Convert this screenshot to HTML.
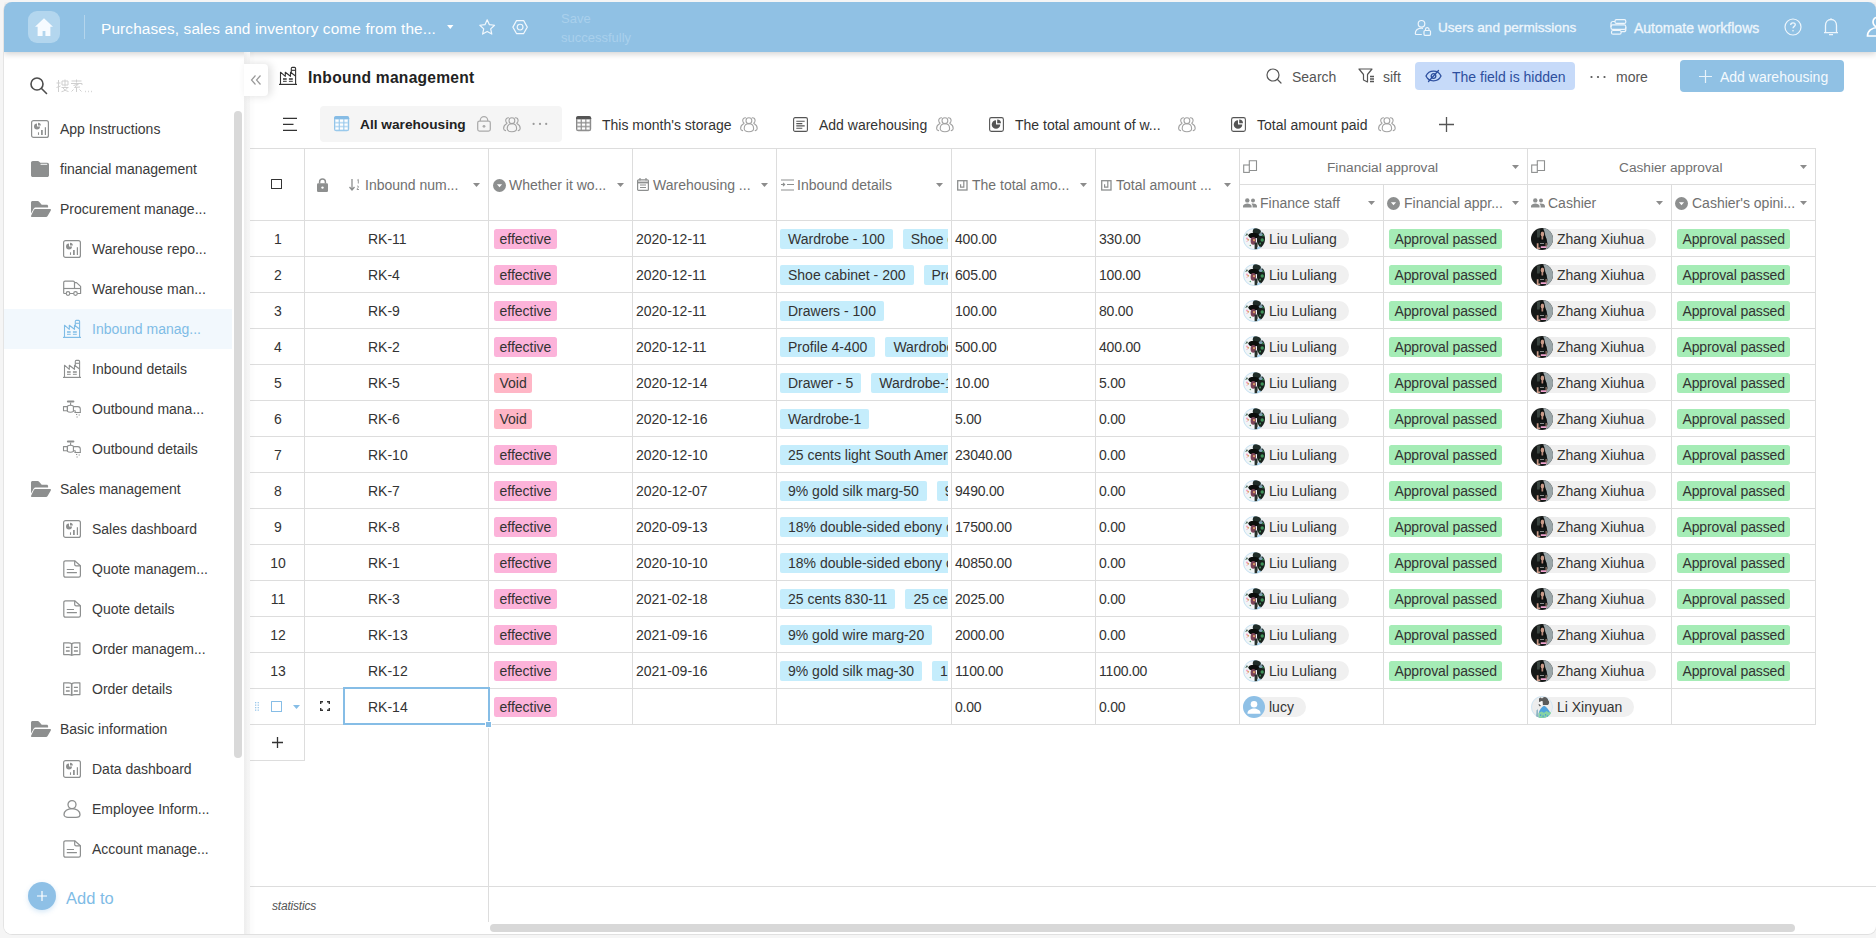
<!DOCTYPE html><html><head><meta charset="utf-8"><title>Inbound management</title><style>
*{box-sizing:border-box;margin:0;padding:0}
html,body{width:1876px;height:938px;overflow:hidden;background:#f5f5f5;font-family:"Liberation Sans", sans-serif;font-size:14px;color:#333}
.abs{position:absolute}
#panel{position:absolute;left:3px;top:2px;width:1874px;height:933px;background:#fff;border-radius:9px;border-left:1px solid #e4e4e4;border-bottom:1px solid #e0e0e0;border-right:1px solid #e4e4e4;overflow:hidden}
#hdr{position:absolute;left:4px;top:2px;width:1872px;height:50px;background:#90c1e4;border-radius:8px 8px 0 0;box-shadow:0 2px 6px rgba(0,0,0,.18);clip-path:inset(0 0 -14px 0)}
.t{position:absolute;white-space:nowrap;line-height:20px;height:20px}
.hl{position:absolute;height:1px;background:#dddddd}
.vl{position:absolute;width:1px;background:#dddddd}
.tag{position:absolute;height:20px;line-height:20px;border-radius:2.500px;padding:0 5.500px;white-space:nowrap;color:#333;font-size:14px}
.pill{position:absolute;height:20px;line-height:20px;border-radius:10px;background:#f0f0f0;padding:0 12px 0 26px;white-space:nowrap;color:#333}
.av{position:absolute;width:22px;height:22px;border-radius:50%;overflow:hidden}
.cell{position:absolute;overflow:hidden;height:35px}
.sb{color:#333}
.ht{color:#707070}
svg{position:absolute;overflow:visible}
</style></head><body>
<div id="panel"></div>
<div class="abs" style="left:4px;top:52px;width:240px;height:882px;background:#fff;border-radius:0 0 0 8px"></div>
<div class="abs" style="left:4px;top:309px;width:228px;height:40px;background:#f2f8fd"></div>
<div class="abs" style="left:234px;top:111px;width:8px;height:647px;background:#d9d9d9;border-radius:4px"></div>
<svg style="left:31px;top:120.0px" width="18" height="18" viewBox="0 0 18 18" fill="none" stroke="#8d8f8f"><rect x=".6" y=".6" width="16.800" height="16.800" rx="2" stroke-width="1.200"/><path d="M6 3.600A3 3 0 1 0 9 6.600H6z" fill="#8d8f8f" stroke="none"/><path d="M7 2.700a2.800 2.800 0 0 1 2.800 2.800H7z" fill="#8d8f8f" stroke="none"/><path d="M7.500 12.300v2.600" stroke-width="1.100"/><path d="M10.900 10.100v4.800" stroke-width="1.700"/><path d="M14.400 7.200v7.700" stroke-width="1.200"/></svg>
<div class="t" style="left:60px;top:119px;color:#3a3a3a">App Instructions</div>
<svg style="left:31px;top:161.0px" width="18" height="16" viewBox="0 0 18 16"><path d="M0 1.800C0 .8.800 0 1.800 0h5c.6 0 1.100.2 1.500.7l1 1.100h6.900c1 0 1.800.8 1.800 1.800v10.600c0 1-.8 1.800-1.800 1.800H1.800C.8 16 0 15.200 0 14.200z" fill="#8d8f8f"/><path d="M10 3.300h5.800" stroke="#e6e8e8" stroke-width="1.200" stroke-linecap="round"/></svg>
<div class="t" style="left:60px;top:159px;color:#3a3a3a">financial management</div>
<svg style="left:31px;top:201.0px" width="20" height="16" viewBox="0 0 20 16"><path d="M0 1.500C0 .7.700 0 1.500 0h5.200c.5 0 .9.200 1.200.5L10.700 3.700h5c.8 0 1.400.6 1.400 1.400v1.300H4.800c-.9 0-1.600.5-2 1.200L0 12.500z" fill="#8d8f8f"/><path d="M4.300 8h14.700c.8 0 1.200.7.800 1.400l-3.200 5.600c-.3.600-.9 1-1.600 1H.9c-.7 0-1.100-.7-.8-1.300l2.700-5.700C3.100 8.400 3.600 8 4.300 8z" fill="#8d8f8f"/></svg>
<div class="t" style="left:60px;top:199px;color:#3a3a3a">Procurement manage...</div>
<svg style="left:63px;top:240.0px" width="18" height="18" viewBox="0 0 18 18" fill="none" stroke="#8d8f8f"><rect x=".6" y=".6" width="16.800" height="16.800" rx="2" stroke-width="1.200"/><path d="M6 3.600A3 3 0 1 0 9 6.600H6z" fill="#8d8f8f" stroke="none"/><path d="M7 2.700a2.800 2.800 0 0 1 2.800 2.800H7z" fill="#8d8f8f" stroke="none"/><path d="M7.500 12.300v2.600" stroke-width="1.100"/><path d="M10.900 10.100v4.800" stroke-width="1.700"/><path d="M14.400 7.200v7.700" stroke-width="1.200"/></svg>
<div class="t" style="left:92px;top:239px;color:#3a3a3a">Warehouse repo...</div>
<svg style="left:63px;top:280.0px" width="18" height="18" viewBox="0 0 18 18" fill="none" stroke="#8d8f8f" stroke-width="1.200" stroke-linejoin="round"><path d="M.7 13.500V2.600c0-.8.600-1.400 1.400-1.400h8c.8 0 1.400.6 1.400 1.400v5.900"/><path d="M11.500 2.600h2l4.100 3.800v7.100H.7"/><path d="M.7 8.500h16.900"/><circle cx="5" cy="13.500" r="1.800" fill="#fff"/><circle cx="12.500" cy="13.500" r="1.800" fill="#fff"/></svg>
<div class="t" style="left:92px;top:279px;color:#3a3a3a">Warehouse man...</div>
<svg style="left:63px;top:320.0px" width="18" height="18" viewBox="0 0 18 18" fill="none" stroke="#7fbce6" stroke-width="1.100" stroke-linejoin="round"><path d="M1.500 17.400V5.200l4.800 4.100V5.200l5.200 4.100V5.200l5 3.800"/><path d="M12.300 5.800V1.400c0-.6.400-1 1-1h2.300c.6 0 1 .4 1 1v16"/><path d="M12.300 3.300h4.300"/><path d="M0 17.400h18" stroke-width="1.200"/><path d="M4 11.900h3.700M9.900 11.900h3.900" stroke-width="1.500"/><path d="M4 14.300h3.700M9.900 14.300h3.900" stroke-width="1"/></svg>
<div class="t" style="left:92px;top:319px;color:#7fbce6">Inbound manag...</div>
<svg style="left:63px;top:360.0px" width="18" height="18" viewBox="0 0 18 18" fill="none" stroke="#8d8f8f" stroke-width="1.100" stroke-linejoin="round"><path d="M1.500 17.400V5.200l4.800 4.100V5.200l5.200 4.100V5.200l5 3.800"/><path d="M12.300 5.800V1.400c0-.6.400-1 1-1h2.300c.6 0 1 .4 1 1v16"/><path d="M12.300 3.300h4.300"/><path d="M0 17.400h18" stroke-width="1.200"/><path d="M4 11.900h3.700M9.900 11.900h3.900" stroke-width="1.500"/><path d="M4 14.300h3.700M9.900 14.300h3.900" stroke-width="1"/></svg>
<div class="t" style="left:92px;top:359px;color:#3a3a3a">Inbound details</div>
<svg style="left:63px;top:400.0px" width="18" height="18" viewBox="0 0 18 18" fill="none" stroke="#8d8f8f" stroke-width="1.100" stroke-linejoin="round"><path d="M4.900 1.500h5.500" stroke-width="2" stroke-linecap="round"/><path d="M7.600 2.500v2.700"/><path d="M4.400 6.200c1.500-1.200 4.500-1.200 6 0v5.200c-1.500 1.200-4.500 1.200-6 0z"/><path d="M.5 6.600h3.900v4.200H.5z"/><path d="M10.400 6.600h4.400c1.500 0 2.500 1 2.500 2.500v3.400h-5.100v-1.800h-1.800"/><path d="M11.600 12.500h6" stroke-width="1.100"/><path d="M13.600 14v1M16.200 14.400v1M14.100 16.400v1" stroke-width="1.200"/></svg>
<div class="t" style="left:92px;top:399px;color:#3a3a3a">Outbound mana...</div>
<svg style="left:63px;top:440.0px" width="18" height="18" viewBox="0 0 18 18" fill="none" stroke="#8d8f8f" stroke-width="1.100" stroke-linejoin="round"><path d="M4.900 1.500h5.500" stroke-width="2" stroke-linecap="round"/><path d="M7.600 2.500v2.700"/><path d="M4.400 6.200c1.500-1.200 4.500-1.200 6 0v5.200c-1.500 1.200-4.500 1.200-6 0z"/><path d="M.5 6.600h3.900v4.200H.5z"/><path d="M10.400 6.600h4.400c1.500 0 2.500 1 2.500 2.500v3.400h-5.100v-1.800h-1.800"/><path d="M11.600 12.500h6" stroke-width="1.100"/><path d="M13.600 14v1M16.200 14.400v1M14.100 16.400v1" stroke-width="1.200"/></svg>
<div class="t" style="left:92px;top:439px;color:#3a3a3a">Outbound details</div>
<svg style="left:31px;top:481.0px" width="20" height="16" viewBox="0 0 20 16"><path d="M0 1.500C0 .7.700 0 1.500 0h5.200c.5 0 .9.200 1.200.5L10.700 3.700h5c.8 0 1.400.6 1.400 1.400v1.300H4.800c-.9 0-1.600.5-2 1.200L0 12.500z" fill="#8d8f8f"/><path d="M4.300 8h14.700c.8 0 1.200.7.800 1.400l-3.200 5.600c-.3.600-.9 1-1.600 1H.9c-.7 0-1.100-.7-.8-1.300l2.700-5.700C3.100 8.400 3.600 8 4.300 8z" fill="#8d8f8f"/></svg>
<div class="t" style="left:60px;top:479px;color:#3a3a3a">Sales management</div>
<svg style="left:63px;top:520.0px" width="18" height="18" viewBox="0 0 18 18" fill="none" stroke="#8d8f8f"><rect x=".6" y=".6" width="16.800" height="16.800" rx="2" stroke-width="1.200"/><path d="M6 3.600A3 3 0 1 0 9 6.600H6z" fill="#8d8f8f" stroke="none"/><path d="M7 2.700a2.800 2.800 0 0 1 2.800 2.800H7z" fill="#8d8f8f" stroke="none"/><path d="M7.500 12.300v2.600" stroke-width="1.100"/><path d="M10.900 10.100v4.800" stroke-width="1.700"/><path d="M14.400 7.200v7.700" stroke-width="1.200"/></svg>
<div class="t" style="left:92px;top:519px;color:#3a3a3a">Sales dashboard</div>
<svg style="left:63px;top:560.0px" width="18" height="18" viewBox="0 0 18 18" fill="none" stroke="#8d8f8f" stroke-width="1.200" stroke-linejoin="round"><path d="M.8 2.500c0-1 .700-1.700 1.700-1.700h9.200l5.700 5v9.700c0 1-.7 1.700-1.700 1.700H2.500c-1 0-1.700-.7-1.700-1.700z"/><path d="M11.700 .8v3.600c0 .8.600 1.400 1.400 1.400h4.300"/><path d="M3.800 9.500H11M3.800 12.700h10.100"/></svg>
<div class="t" style="left:92px;top:559px;color:#3a3a3a">Quote managem...</div>
<svg style="left:63px;top:600.0px" width="18" height="18" viewBox="0 0 18 18" fill="none" stroke="#8d8f8f" stroke-width="1.200" stroke-linejoin="round"><path d="M.8 2.500c0-1 .700-1.700 1.700-1.700h9.200l5.700 5v9.700c0 1-.7 1.700-1.700 1.700H2.500c-1 0-1.700-.7-1.700-1.700z"/><path d="M11.700 .8v3.600c0 .8.600 1.400 1.400 1.400h4.300"/><path d="M3.800 9.500H11M3.800 12.700h10.100"/></svg>
<div class="t" style="left:92px;top:599px;color:#3a3a3a">Quote details</div>
<svg style="left:63px;top:642.0px" width="18" height="14" viewBox="0 0 18 14" fill="none" stroke="#8d8f8f" stroke-width="1.200" stroke-linejoin="round"><path d="M.7 .8h5c1.400 0 2.300.300 3 1 .7-.700 1.600-1 3-1h5.200v11.800h-5.200c-1.400 0-2.300.2-3 .8-.7-.6-1.600-.8-3-.8h-5z"/><path d="M8.700 1.800v11.500" stroke-width="1.600"/><path d="M2.900 5.300h3.800M2.900 9h3.800M10.900 5.300h4M10.900 9h4" stroke-width="1.300"/></svg>
<div class="t" style="left:92px;top:639px;color:#3a3a3a">Order managem...</div>
<svg style="left:63px;top:682.0px" width="18" height="14" viewBox="0 0 18 14" fill="none" stroke="#8d8f8f" stroke-width="1.200" stroke-linejoin="round"><path d="M.7 .8h5c1.400 0 2.300.300 3 1 .7-.700 1.600-1 3-1h5.200v11.800h-5.200c-1.400 0-2.300.2-3 .8-.7-.6-1.600-.8-3-.8h-5z"/><path d="M8.700 1.800v11.500" stroke-width="1.600"/><path d="M2.900 5.300h3.800M2.900 9h3.800M10.900 5.300h4M10.900 9h4" stroke-width="1.300"/></svg>
<div class="t" style="left:92px;top:679px;color:#3a3a3a">Order details</div>
<svg style="left:31px;top:721.0px" width="20" height="16" viewBox="0 0 20 16"><path d="M0 1.500C0 .7.700 0 1.500 0h5.200c.5 0 .9.200 1.200.5L10.700 3.700h5c.8 0 1.400.6 1.400 1.400v1.300H4.800c-.9 0-1.600.5-2 1.200L0 12.500z" fill="#8d8f8f"/><path d="M4.300 8h14.700c.8 0 1.200.7.800 1.400l-3.200 5.600c-.3.600-.9 1-1.600 1H.9c-.7 0-1.100-.7-.8-1.300l2.700-5.700C3.100 8.400 3.600 8 4.300 8z" fill="#8d8f8f"/></svg>
<div class="t" style="left:60px;top:719px;color:#3a3a3a">Basic information</div>
<svg style="left:63px;top:760.0px" width="18" height="18" viewBox="0 0 18 18" fill="none" stroke="#8d8f8f"><rect x=".6" y=".6" width="16.800" height="16.800" rx="2" stroke-width="1.200"/><path d="M6 3.600A3 3 0 1 0 9 6.600H6z" fill="#8d8f8f" stroke="none"/><path d="M7 2.700a2.800 2.800 0 0 1 2.800 2.800H7z" fill="#8d8f8f" stroke="none"/><path d="M7.500 12.300v2.600" stroke-width="1.100"/><path d="M10.900 10.100v4.800" stroke-width="1.700"/><path d="M14.400 7.200v7.700" stroke-width="1.200"/></svg>
<div class="t" style="left:92px;top:759px;color:#3a3a3a">Data dashboard</div>
<svg style="left:63px;top:800.0px" width="18" height="18" viewBox="0 0 18 18" fill="none" stroke="#8d8f8f" stroke-width="1.300"><circle cx="9" cy="4.600" r="4"/><path d="M1 14.400c0-3.400 3.500-5.800 8-5.800s8 2.400 8 5.800c0 1.800-1.800 2.900-4 2.900H5c-2.200 0-4-1.100-4-2.900z"/></svg>
<div class="t" style="left:92px;top:799px;color:#3a3a3a">Employee Inform...</div>
<svg style="left:63px;top:840.0px" width="18" height="18" viewBox="0 0 18 18" fill="none" stroke="#8d8f8f" stroke-width="1.200" stroke-linejoin="round"><path d="M.8 2.500c0-1 .700-1.700 1.700-1.700h9.200l5.700 5v9.700c0 1-.7 1.700-1.700 1.700H2.500c-1 0-1.700-.7-1.700-1.700z"/><path d="M11.700 .8v3.600c0 .8.600 1.400 1.400 1.400h4.300"/><path d="M3.800 9.500H11M3.800 12.700h10.100"/></svg>
<div class="t" style="left:92px;top:839px;color:#3a3a3a">Account manage...</div>
<svg style="left:29px;top:76px" width="19" height="19" viewBox="0 0 19 19" fill="none" stroke="#4d4d4d" stroke-width="1.600" stroke-linecap="round"><circle cx="8" cy="8" r="6"/><path d="M12.500 12.500l5 5"/></svg>
<svg style="left:56px;top:79px" width="40" height="14" viewBox="0 0 40 14" fill="none" stroke="#cfcfcf" stroke-width="1"><path d="M2.500 1v12M.5 4h4M.5 8.500l4-1.500M6 2h6v4H6zM9 .5v7M5.500 8.500h7M7 8.500c.5 2 3 3.500 5.500 4M11.500 8.500c-.8 2-3 3.600-6 4.200"/><path d="M20.500 .5v3M15.500 2h10M15 4.500h11v1.500M17.500 6.500l5-1.500-4 3.500 5.500-.5M20.500 8.500V13M17.500 10.500l-2 2M23.500 10.500l2 2"/><path d="M29 12.500h.8M32 12.500h.8M35 12.500h.8" stroke-width="1.400"/></svg>
<div class="abs" style="left:28px;top:882px;width:28px;height:28px;border-radius:50%;background:#8ec0e6;box-shadow:0 2px 5px rgba(120,180,230,.3)"></div>
<svg style="left:36px;top:890px" width="12" height="12" viewBox="0 0 12 12" stroke="#fff" stroke-width="1.200"><path d="M6 1v10M1 6h10"/></svg>
<div class="t" style="left:66px;top:886.700px;font-size:16.500px;line-height:22px;height:22px;color:#7fbce6">Add to</div>
<div id="hdr"></div>
<div class="abs" style="left:28px;top:11px;width:32px;height:32px;border-radius:9px;background:#b3d6ee"></div>
<svg style="left:34px;top:17px" width="20" height="20" viewBox="0 0 20 20"><path d="M10 1.200L1 9.700h2.600V19h5v-5h2.800v5h5V9.700H19z" fill="#f6fbff"/></svg>
<div class="abs" style="left:84px;top:15px;width:1px;height:24px;background:#b4d5ec"></div>
<div class="t" style="left:101px;top:17px;font-size:15.400px;letter-spacing:.12px;line-height:24px;height:24px;color:#fff">Purchases, sales and inventory come from the...</div>
<svg style="left:447px;top:25px" width="6.500" height="4" viewBox="0 0 8 5"><path d="M0 0h8L4 5z" fill="#fff"/></svg>
<svg style="left:477.500px;top:17.600px" width="18.400" height="18.400" viewBox="0 0 20 20" fill="none" stroke="#f2f8fd" stroke-width="1.300" stroke-linejoin="round"><path d="M10 2l2.400 5.300 5.600.6-4.200 3.900 1.200 5.700L10 14.600 5 17.500l1.200-5.700L2 7.900l5.600-.6z"/></svg>
<svg style="left:512.300px;top:18.900px" width="16.200" height="16.200" viewBox="0 0 18 18" fill="none" stroke="#f2f8fd" stroke-width="1.300" stroke-linejoin="round"><path d="M5 1.800h8L17 9l-4 7.200H5L1 9z"/><circle cx="9" cy="9" r="3.200"/></svg>
<div class="t" style="left:561px;top:10px;font-size:13px;line-height:18px;height:18px;color:#a9d0ec">Save</div>
<div class="t" style="left:561px;top:29px;font-size:13px;line-height:18px;height:18px;color:#a9d0ec">successfully</div>
<svg style="left:1414px;top:19px" width="18" height="18" viewBox="0 0 18 18" fill="none" stroke="#eef6fc" stroke-width="1.200"><circle cx="7.500" cy="4.800" r="3.300"/><path d="M9 9.300c-.5-.1-1-.2-1.500-.2C4 9.100 1.300 11.200 1.300 14.500c0 .600.400 1 1 1h5.500"/><rect x="10" y="11.500" width="6.500" height="4.800" rx="1"/><path d="M11.500 11.500v-1.200a1.750 1.750 0 0 1 3.500 0v1.200"/></svg>
<div class="t" style="left:1438px;top:18px;font-size:13.600px;color:#eef6fc;-webkit-text-stroke:.3px #eef6fc">Users and permissions</div>
<svg style="left:1609.500px;top:18.500px" width="18" height="18" viewBox="0 0 18 18" fill="none" stroke="#eef6fc" stroke-width="1.200" stroke-linejoin="round"><rect x="5" y=".7" width="10.800" height="3.700" rx="1.500"/><rect x="1" y="5.900" width="14.800" height="4.500" rx="1.600"/><rect x="1.500" y="11.500" width="9.600" height="3.700" rx="1.500"/><path d="M5 2.500H3c-1.200 0-2 .8-2 2v3.500M15.800 8.200v2.500c0 1.200-.8 2-2 2h-2.700" /></svg>
<div class="t" style="left:1634px;top:18px;font-size:14px;color:#eef6fc;-webkit-text-stroke:.3px #eef6fc">Automate workflows</div>
<svg style="left:1784px;top:18px" width="18" height="18" viewBox="0 0 18 18" fill="none" stroke="#eef6fc" stroke-width="1.200"><circle cx="9" cy="9" r="8"/><path d="M6.700 7c0-1.300 1-2.200 2.300-2.200s2.300.8 2.300 2c0 1.500-2.300 1.700-2.300 3.500" stroke-width="1.300"/><circle cx="9" cy="12.700" r=".8" fill="#eef6fc" stroke="none"/></svg>
<svg style="left:1823px;top:17px" width="16" height="20" viewBox="0 0 16 20" fill="none" stroke="#eef6fc" stroke-width="1.300" stroke-linejoin="round"><path d="M8 1.200v1.300M2.500 15.500V8.500C2.500 5 4.800 2.500 8 2.500s5.500 2.500 5.500 6v7M1 15.700h14M6 17.700h4" /></svg>
<svg style="left:1866px;top:16px" width="24" height="22" viewBox="0 0 24 22" fill="none" stroke="#fff" stroke-width="1.700"><circle cx="12" cy="6" r="5"/><path d="M1.500 20c0-5 4-8.500 10.500-8.500S22.500 15 22.500 20z"/></svg>
<svg style="left:279px;top:67px" width="18" height="18" viewBox="0 0 18 18" fill="none" stroke="#333" stroke-width="1.100" stroke-linejoin="round"><path d="M1.500 17.400V5.200l4.800 4.100V5.200l5.200 4.100V5.200l5 3.800"/><path d="M12.300 5.800V1.400c0-.6.400-1 1-1h2.300c.6 0 1 .4 1 1v16"/><path d="M12.300 3.300h4.300"/><path d="M0 17.400h18" stroke-width="1.200"/><path d="M4 11.900h3.700M9.900 11.900h3.900" stroke-width="1.500"/><path d="M4 14.300h3.700M9.900 14.300h3.900" stroke-width="1"/></svg>
<div class="t" style="left:308px;top:67px;font-size:15.600px;letter-spacing:.25px;font-weight:700;line-height:22px;height:22px;color:#222">Inbound management</div>
<svg style="left:1266px;top:68px" width="16" height="16" viewBox="0 0 16 16" fill="none" stroke="#555" stroke-width="1.200" stroke-linecap="round"><circle cx="7" cy="7" r="6"/><path d="M11.500 11.500l3.500 3.500"/></svg>
<div class="t" style="left:1292px;top:67px;color:#555">Search</div>
<svg style="left:1358px;top:68px" width="18" height="16" viewBox="0 0 18 16" fill="none" stroke="#555" stroke-width="1.200" stroke-linejoin="round"><path d="M1 1h13l-4.500 5.500V14l-4-2V6.500z"/><path d="M12 8.500h4M12 11h4M12 13.500h4" stroke-width="1.300"/></svg>
<div class="t" style="left:1383px;top:67px;color:#555">sift</div>
<div class="abs" style="left:1415px;top:62px;width:160px;height:28px;border-radius:4px;background:#c6daf9"></div>
<svg style="left:1425px;top:69px" width="17" height="14" viewBox="0 0 17 14" fill="none" stroke="#2d4f9e" stroke-width="1.300" stroke-linecap="round"><path d="M1 7C2.500 3.800 5.300 2.200 8.500 2.200S14.500 3.800 16 7c-1.500 3.200-4.300 4.800-7.500 4.800S2.500 10.200 1 7z"/><circle cx="8.500" cy="7" r="2.300"/><path d="M13.500 1.500L3.500 12.500"/></svg>
<div class="t" style="left:1452px;top:67px;color:#2d4f9e">The field is hidden</div>
<svg style="left:1590px;top:75px" width="16" height="4" viewBox="0 0 16 4" fill="#555"><circle cx="1.500" cy="2" r="1.100"/><circle cx="8" cy="2" r="1.100"/><circle cx="14.500" cy="2" r="1.100"/></svg>
<div class="t" style="left:1616px;top:67px;color:#555">more</div>
<div class="abs" style="left:1680px;top:60px;width:164px;height:32px;border-radius:4px;background:#90c1e4"></div>
<svg style="left:1699px;top:70px" width="13" height="13" viewBox="0 0 13 13" stroke="#e8f3fb" stroke-width="1.200"><path d="M6.500 0v13M0 6.500h13"/></svg>
<div class="t" style="left:1720px;top:67px;color:#f4fafe">Add warehousing</div>
<svg style="left:283px;top:117px" width="14" height="14" viewBox="0 0 14 14" stroke="#333" stroke-width="1.200"><path d="M0 1.300h14M0 7.300h10.500M0 13.300h14"/></svg>
<div class="abs" style="left:320px;top:106px;width:242px;height:36px;border-radius:4px;background:#f5f5f5"></div>
<svg style="left:334.4px;top:116.4px" width="15.200" height="15.200" viewBox="0 0 15.200 15.200"><rect width="15.200" height="15.200" rx="2.300" fill="#93c5ea"/><rect x="1.100" y="2.800" width="13" height="11.400" fill="#bcdcf3"/><path d="M0 3V2.300C0 1 1 0 2.300 0h10.600c1.300 0 2.300 1 2.300 2.300V3z" fill="#86bce5"/><path d="M5.250 2.800v11.400M9.850 2.800v11.400" stroke="#93c5ea" stroke-width=".9"/><rect x="1.5" y="3.7" width="3.1" height="2.100" fill="#fff"/><rect x="5.9" y="3.7" width="3.3" height="2.100" fill="#fff"/><rect x="10.5" y="3.7" width="3.1" height="2.100" fill="#fff"/><rect x="1.5" y="7.6" width="3.1" height="2.100" fill="#fff"/><rect x="5.9" y="7.6" width="3.3" height="2.100" fill="#fff"/><rect x="10.5" y="7.6" width="3.1" height="2.100" fill="#fff"/><rect x="1.5" y="11.4" width="3.1" height="2.100" fill="#fff"/><rect x="5.9" y="11.4" width="3.3" height="2.100" fill="#fff"/><rect x="10.5" y="11.4" width="3.1" height="2.100" fill="#fff"/></svg>
<div class="t" style="left:360px;top:115px;font-weight:700;font-size:13.700px;color:#222">All warehousing</div>
<svg style="left:477px;top:116.3px" width="14" height="16" viewBox="0 0 14 16" fill="none" stroke="#ababab" stroke-width="1.250"><rect x=".7" y="5" width="12.600" height="10.100" rx="1.800"/><path d="M3.300 5V4.200a3.700 3.700 0 0 1 7.400 0V5"/><circle cx="7" cy="10.300" r="1.400" fill="#ababab" stroke="none"/></svg>
<svg style="left:503px;top:116.5px" width="18" height="15.500" viewBox="0 0 18 15.500" fill="none" stroke="#a3a3a3" stroke-width="1.100" stroke-linecap="round"><circle cx="8.900" cy="3.700" r="2.900"/><path d="M4.200 11.500c0-3 2-4.700 4.700-4.700s4.700 1.700 4.700 4.700c0 2-1.500 3.200-4.700 3.200s-4.700-1.200-4.700-3.200z"/><path d="M5.500 .8c-1.800 0-2.800 1.200-2.800 2.800 0 1.200.6 2.100 1.400 2.600M3.600 6.700C1.500 7.700.6 9.700.6 11.500c0 1 .6 1.800 2 2.100"/><path d="M12.300 .8c1.800 0 2.800 1.200 2.800 2.800 0 1.200-.6 2.100-1.400 2.600M14.200 6.700c2.100 1 3 3 3 4.800 0 1-.6 1.800-2 2.100"/></svg>
<svg style="left:532px;top:122px" width="16" height="4" viewBox="0 0 16 4" fill="#999"><circle cx="1.600" cy="1.900" r="1.100"/><circle cx="8" cy="1.900" r="1.100"/><circle cx="14.200" cy="1.900" r="1.100"/></svg>
<svg style="left:576.4px;top:116.4px" width="15.200" height="15.200" viewBox="0 0 15.200 15.200"><rect width="15.200" height="15.200" rx="2.300" fill="#8a8a8a"/><rect x="1.100" y="2.800" width="13" height="11.400" fill="#a8a8a8"/><path d="M0 3V2.300C0 1 1 0 2.300 0h10.600c1.300 0 2.300 1 2.300 2.300V3z" fill="#555"/><path d="M5.250 2.800v11.400M9.850 2.800v11.400" stroke="#8a8a8a" stroke-width=".9"/><rect x="1.5" y="3.7" width="3.1" height="2.100" fill="#fff"/><rect x="5.9" y="3.7" width="3.3" height="2.100" fill="#fff"/><rect x="10.5" y="3.7" width="3.1" height="2.100" fill="#fff"/><rect x="1.5" y="7.6" width="3.1" height="2.100" fill="#fff"/><rect x="5.9" y="7.6" width="3.3" height="2.100" fill="#fff"/><rect x="10.5" y="7.6" width="3.1" height="2.100" fill="#fff"/><rect x="1.5" y="11.4" width="3.1" height="2.100" fill="#fff"/><rect x="5.9" y="11.4" width="3.3" height="2.100" fill="#fff"/><rect x="10.5" y="11.4" width="3.1" height="2.100" fill="#fff"/></svg>
<div class="t" style="left:602px;top:115px">This month&#39;s storage</div>
<svg style="left:740px;top:116.5px" width="18" height="15.500" viewBox="0 0 18 15.500" fill="none" stroke="#a3a3a3" stroke-width="1.100" stroke-linecap="round"><circle cx="8.900" cy="3.700" r="2.900"/><path d="M4.200 11.500c0-3 2-4.700 4.700-4.700s4.700 1.700 4.700 4.700c0 2-1.500 3.200-4.700 3.200s-4.700-1.200-4.700-3.200z"/><path d="M5.500 .8c-1.800 0-2.800 1.200-2.800 2.800 0 1.200.6 2.100 1.400 2.600M3.600 6.700C1.500 7.700.6 9.700.6 11.500c0 1 .6 1.800 2 2.100"/><path d="M12.300 .8c1.800 0 2.800 1.200 2.800 2.800 0 1.200-.6 2.100-1.400 2.600M14.200 6.700c2.100 1 3 3 3 4.800 0 1-.6 1.800-2 2.100"/></svg>
<svg style="left:793px;top:117px" width="15" height="15" viewBox="0 0 15 15" fill="none" stroke="#555" stroke-width="1.100"><rect x=".6" y=".6" width="13.800" height="13.800" rx="1.500"/><path d="M3.300 4.300h8.400M3.300 6.600h6M3.300 8.900h8.400M3.300 11.200h6"/></svg>
<div class="t" style="left:819px;top:115px">Add warehousing</div>
<svg style="left:936px;top:116.5px" width="18" height="15.500" viewBox="0 0 18 15.500" fill="none" stroke="#a3a3a3" stroke-width="1.100" stroke-linecap="round"><circle cx="8.900" cy="3.700" r="2.900"/><path d="M4.200 11.500c0-3 2-4.700 4.700-4.700s4.700 1.700 4.700 4.700c0 2-1.500 3.200-4.700 3.200s-4.700-1.200-4.700-3.200z"/><path d="M5.500 .8c-1.800 0-2.800 1.200-2.800 2.800 0 1.200.6 2.100 1.400 2.600M3.600 6.700C1.500 7.700.6 9.700.6 11.500c0 1 .6 1.800 2 2.100"/><path d="M12.300 .8c1.800 0 2.800 1.200 2.800 2.800 0 1.200-.6 2.100-1.400 2.600M14.200 6.700c2.100 1 3 3 3 4.800 0 1-.6 1.800-2 2.100"/></svg>
<svg style="left:989px;top:117px" width="15" height="15" viewBox="0 0 15 15"><rect x=".6" y=".6" width="13.800" height="13.800" rx="1.800" fill="none" stroke="#555" stroke-width="1.100"/><path d="M7 3.200A4.300 4.300 0 1 0 11.300 7.500H7z" fill="#555"/><path d="M8.200 2.400a3.800 3.800 0 0 1 3.800 3.800H8.200z" fill="#555"/></svg>
<div class="t" style="left:1015px;top:115px">The total amount of w...</div>
<svg style="left:1178px;top:116.5px" width="18" height="15.500" viewBox="0 0 18 15.500" fill="none" stroke="#a3a3a3" stroke-width="1.100" stroke-linecap="round"><circle cx="8.900" cy="3.700" r="2.900"/><path d="M4.200 11.500c0-3 2-4.700 4.700-4.700s4.700 1.700 4.700 4.700c0 2-1.500 3.200-4.700 3.200s-4.700-1.200-4.700-3.200z"/><path d="M5.500 .8c-1.800 0-2.800 1.200-2.800 2.800 0 1.200.6 2.100 1.400 2.600M3.600 6.700C1.500 7.700.6 9.700.6 11.500c0 1 .6 1.800 2 2.100"/><path d="M12.300 .8c1.800 0 2.800 1.200 2.800 2.800 0 1.200-.6 2.100-1.400 2.600M14.200 6.700c2.100 1 3 3 3 4.800 0 1-.6 1.800-2 2.100"/></svg>
<svg style="left:1231px;top:117px" width="15" height="15" viewBox="0 0 15 15"><rect x=".6" y=".6" width="13.800" height="13.800" rx="1.800" fill="none" stroke="#555" stroke-width="1.100"/><path d="M7 3.200A4.300 4.300 0 1 0 11.300 7.500H7z" fill="#555"/><path d="M8.200 2.400a3.800 3.800 0 0 1 3.800 3.800H8.200z" fill="#555"/></svg>
<div class="t" style="left:1257px;top:115px">Total amount paid</div>
<svg style="left:1378px;top:116.5px" width="18" height="15.500" viewBox="0 0 18 15.500" fill="none" stroke="#a3a3a3" stroke-width="1.100" stroke-linecap="round"><circle cx="8.900" cy="3.700" r="2.900"/><path d="M4.200 11.500c0-3 2-4.700 4.700-4.700s4.700 1.700 4.700 4.700c0 2-1.500 3.200-4.700 3.200s-4.700-1.200-4.700-3.200z"/><path d="M5.500 .8c-1.800 0-2.800 1.200-2.800 2.800 0 1.200.6 2.100 1.400 2.600M3.600 6.700C1.500 7.700.6 9.700.6 11.500c0 1 .6 1.800 2 2.100"/><path d="M12.300 .8c1.800 0 2.800 1.200 2.800 2.800 0 1.200-.6 2.100-1.400 2.600M14.200 6.700c2.100 1 3 3 3 4.800 0 1-.6 1.800-2 2.100"/></svg>
<svg style="left:1439px;top:117px" width="15" height="15" viewBox="0 0 15 15" stroke="#555" stroke-width="1.300"><path d="M7.500 0v15M0 7.500h15"/></svg>
<div class="hl" style="left:244px;top:148px;width:1572px"></div>
<div class="hl" style="left:1239px;top:184px;width:577px"></div>
<div class="hl" style="left:244px;top:220px;width:1572px"></div>
<div class="hl" style="left:244px;top:256px;width:1572px"></div>
<div class="hl" style="left:244px;top:292px;width:1572px"></div>
<div class="hl" style="left:244px;top:328px;width:1572px"></div>
<div class="hl" style="left:244px;top:364px;width:1572px"></div>
<div class="hl" style="left:244px;top:400px;width:1572px"></div>
<div class="hl" style="left:244px;top:436px;width:1572px"></div>
<div class="hl" style="left:244px;top:472px;width:1572px"></div>
<div class="hl" style="left:244px;top:508px;width:1572px"></div>
<div class="hl" style="left:244px;top:544px;width:1572px"></div>
<div class="hl" style="left:244px;top:580px;width:1572px"></div>
<div class="hl" style="left:244px;top:616px;width:1572px"></div>
<div class="hl" style="left:244px;top:652px;width:1572px"></div>
<div class="hl" style="left:244px;top:688px;width:1572px"></div>
<div class="hl" style="left:244px;top:724px;width:1572px"></div>
<div class="hl" style="left:244px;top:760px;width:61px"></div>
<div class="vl" style="left:304px;top:148px;height:613px"></div>
<div class="vl" style="left:488px;top:148px;height:774px"></div>
<div class="vl" style="left:632px;top:148px;height:577px"></div>
<div class="vl" style="left:776px;top:148px;height:577px"></div>
<div class="vl" style="left:951px;top:148px;height:577px"></div>
<div class="vl" style="left:1095px;top:148px;height:577px"></div>
<div class="vl" style="left:1239px;top:148px;height:577px"></div>
<div class="vl" style="left:1383px;top:184px;height:541px"></div>
<div class="vl" style="left:1527px;top:148px;height:577px"></div>
<div class="vl" style="left:1671px;top:184px;height:541px"></div>
<div class="vl" style="left:1815px;top:148px;height:577px"></div>
<div class="hl" style="left:244px;top:886px;width:1634px"></div>
<div class="t" style="left:272px;top:896px;font-size:12px;font-style:italic;color:#555;letter-spacing:-.2px">statistics</div>
<div class="abs" style="left:490px;top:924px;width:1305px;height:8px;border-radius:4px;background:#d8d8d8"></div>
<div class="abs" style="left:271px;top:179px;width:11px;height:10px;border:1.400px solid #333;border-radius:.5px"></div>
<svg style="left:317px;top:178px" width="11" height="14" viewBox="0 0 11 14"><path d="M2.600 5.500V3.800a2.900 2.900 0 0 1 5.800 0V5.500" fill="none" stroke="#8d8f8f" stroke-width="1.500"/><rect x="0" y="5.300" width="11" height="8.700" rx="1.200" fill="#8d8f8f"/><circle cx="5.500" cy="9.600" r="1.200" fill="#fff"/></svg>
<svg style="left:349px;top:179px" width="12" height="12" viewBox="0 0 12 12" fill="none" stroke="#8d8f8f" stroke-width="1.300"><path d="M3 0v10.500M.5 8L3 11l2.500-3"/><path d="M8.300 1.200l1-.7v4M8 7.500c.3-.5 1.500-.6 1.500.2S8 9.500 8 10.500h2" stroke-width=".9"/></svg>
<div class="t ht" style="left:365px;top:175px">Inbound num...</div>
<svg style="left:472.5px;top:183px" width="7" height="4" viewBox="0 0 7 4"><path d="M0 0h7L3.500 4z" fill="#8c8c8c"/></svg>
<svg style="left:492.5px;top:178.5px" width="13" height="13" viewBox="0 0 13 13"><circle cx="6.500" cy="6.500" r="6.500" fill="#8d8f8f"/><path d="M3.900 5.300h5.200L6.500 8.200z" fill="#fff"/></svg>
<div class="t ht" style="left:509px;top:175px">Whether it wo...</div>
<svg style="left:616.5px;top:183px" width="7" height="4" viewBox="0 0 7 4"><path d="M0 0h7L3.500 4z" fill="#8c8c8c"/></svg>
<svg style="left:637px;top:178px" width="12" height="13" viewBox="0 0 12 13" fill="none" stroke="#8d8f8f" stroke-width="1.200"><rect x=".6" y="1.800" width="10.800" height="10.600" rx="1"/><path d="M.6 4.500h10.800" stroke-width="1.800"/><path d="M3 7h6M3 9.500h6" stroke-width="1.100"/><path d="M3 0v2.500M9 0v2.500"/></svg>
<div class="t ht" style="left:653px;top:175px">Warehousing ...</div>
<svg style="left:760.5px;top:183px" width="7" height="4" viewBox="0 0 7 4"><path d="M0 0h7L3.500 4z" fill="#8c8c8c"/></svg>
<svg style="left:781px;top:179px" width="13" height="12" viewBox="0 0 13 12" fill="none" stroke="#8d8f8f" stroke-width="1.100"><path d="M0 1h13M6 5.500h7M0 11h13M0 5.500h3.500M2 3.800l1.700 1.700L2 7.200"/></svg>
<div class="t ht" style="left:797px;top:175px">Inbound details</div>
<svg style="left:935.5px;top:183px" width="7" height="4" viewBox="0 0 7 4"><path d="M0 0h7L3.500 4z" fill="#8c8c8c"/></svg>
<svg style="left:956.5px;top:180px" width="11" height="11" viewBox="0 0 11 11" fill="none" stroke="#8d8f8f" stroke-width="1.300"><rect x=".7" y=".7" width="9.300" height="9.300"/><path d="M6.800 .7v6.500H3.600V4.300" stroke-width="1.200"/></svg>
<div class="t ht" style="left:972px;top:175px">The total amo...</div>
<svg style="left:1079.5px;top:183px" width="7" height="4" viewBox="0 0 7 4"><path d="M0 0h7L3.500 4z" fill="#8c8c8c"/></svg>
<svg style="left:1100.5px;top:180px" width="11" height="11" viewBox="0 0 11 11" fill="none" stroke="#8d8f8f" stroke-width="1.300"><rect x=".7" y=".7" width="9.300" height="9.300"/><path d="M6.800 .7v6.500H3.600V4.300" stroke-width="1.200"/></svg>
<div class="t ht" style="left:1116px;top:175px">Total amount ...</div>
<svg style="left:1223.5px;top:183px" width="7" height="4" viewBox="0 0 7 4"><path d="M0 0h7L3.500 4z" fill="#8c8c8c"/></svg>
<svg style="left:1243px;top:160px" width="14" height="13" viewBox="0 0 14 13" fill="none" stroke="#8d8f8f" stroke-width="1.100"><rect x=".7" y="5" width="5.600" height="7.400"/><path d="M6.300 5V.7h7.200v9.800H6.300"/></svg>
<div class="t ht" style="left:1327px;top:158px;font-size:13.700px">Financial approval</div>
<svg style="left:1511.5px;top:165px" width="7" height="4" viewBox="0 0 7 4"><path d="M0 0h7L3.500 4z" fill="#8c8c8c"/></svg>
<svg style="left:1531px;top:160px" width="14" height="13" viewBox="0 0 14 13" fill="none" stroke="#8d8f8f" stroke-width="1.100"><rect x=".7" y="5" width="5.600" height="7.400"/><path d="M6.300 5V.7h7.200v9.800H6.300"/></svg>
<div class="t ht" style="left:1619px;top:158px;font-size:13.700px">Cashier approval</div>
<svg style="left:1799.5px;top:165px" width="7" height="4" viewBox="0 0 7 4"><path d="M0 0h7L3.500 4z" fill="#8c8c8c"/></svg>
<svg style="left:1243px;top:198px" width="14" height="10" viewBox="0 0 14 10" fill="#8d8f8f"><circle cx="4.300" cy="2.400" r="2.200"/><circle cx="10" cy="2.400" r="2"/><path d="M0 9.500V8c0-1.700 2.600-2.600 4.300-2.600S8.600 6.300 8.600 8v1.500z"/><path d="M9.600 9.500V8c0-1-.500-1.800-1.200-2.300.500-.1 1-.2 1.600-.2 1.600 0 4 .8 4 2.500v1.500z"/></svg>
<div class="t ht" style="left:1260px;top:193px">Finance staff</div>
<svg style="left:1367.5px;top:201px" width="7" height="4" viewBox="0 0 7 4"><path d="M0 0h7L3.500 4z" fill="#8c8c8c"/></svg>
<svg style="left:1387px;top:196.5px" width="13" height="13" viewBox="0 0 13 13"><circle cx="6.500" cy="6.500" r="6.500" fill="#8d8f8f"/><path d="M3.900 5.300h5.200L6.500 8.200z" fill="#fff"/></svg>
<div class="t ht" style="left:1404px;top:193px">Financial appr...</div>
<svg style="left:1511.5px;top:201px" width="7" height="4" viewBox="0 0 7 4"><path d="M0 0h7L3.500 4z" fill="#8c8c8c"/></svg>
<svg style="left:1531px;top:198px" width="14" height="10" viewBox="0 0 14 10" fill="#8d8f8f"><circle cx="4.300" cy="2.400" r="2.200"/><circle cx="10" cy="2.400" r="2"/><path d="M0 9.500V8c0-1.700 2.600-2.600 4.300-2.600S8.600 6.300 8.600 8v1.500z"/><path d="M9.600 9.500V8c0-1-.500-1.800-1.200-2.300.500-.1 1-.2 1.600-.2 1.600 0 4 .8 4 2.500v1.500z"/></svg>
<div class="t ht" style="left:1548px;top:193px">Cashier</div>
<svg style="left:1655.5px;top:201px" width="7" height="4" viewBox="0 0 7 4"><path d="M0 0h7L3.500 4z" fill="#8c8c8c"/></svg>
<svg style="left:1675px;top:196.5px" width="13" height="13" viewBox="0 0 13 13"><circle cx="6.500" cy="6.500" r="6.500" fill="#8d8f8f"/><path d="M3.900 5.300h5.200L6.500 8.200z" fill="#fff"/></svg>
<div class="t ht" style="left:1692px;top:193px">Cashier&#39;s opini...</div>
<svg style="left:1799.5px;top:201px" width="7" height="4" viewBox="0 0 7 4"><path d="M0 0h7L3.500 4z" fill="#8c8c8c"/></svg>
<div class="t" style="left:258px;width:40px;text-align:center;top:229px">1</div>
<div class="t" style="left:368px;top:229px">RK-11</div>
<div class="tag" style="left:494px;top:229px;background:#fcb3da">effective</div>
<div class="t" style="left:636px;top:229px">2020-12-11</div>
<div class="abs" style="left:780px;top:229px;width:168px;height:20px;overflow:hidden;white-space:nowrap"><span style="display:inline-block;height:20px;line-height:20px;background:#c5edfc;border-radius:2px;padding:0 8px;margin-right:10px;font-size:14px">Wardrobe - 100</span><span style="display:inline-block;height:20px;line-height:20px;background:#c5edfc;border-radius:2px;padding:0 8px;margin-right:10px;font-size:14px">Shoe cabinet - 100</span></div>
<div class="t" style="left:955px;top:229px;letter-spacing:-.2px">400.00</div>
<div class="t" style="left:1099px;top:229px;letter-spacing:-.2px">330.00</div>
<div class="pill" style="left:1243px;top:229px">Liu Luliang</div>
<svg style="left:1243px;top:228px" width="22" height="22" viewBox="0 0 22 22"><defs><clipPath id="c"><circle cx="11" cy="11" r="11"/></clipPath></defs><g clip-path="url(#c)"><rect width="22" height="22" fill="#f1f5f7"/><circle cx="11" cy="11" r="10.500" fill="none" stroke="#c5e2f4" stroke-width="1"/><ellipse cx="13.800" cy="3.200" rx="4" ry="3.200" fill="#1f2c28"/><path d="M14 5.500L22 4v15.500l-5 .5-3-6z" fill="#17211c"/><ellipse cx="10.600" cy="7.600" rx="5.300" ry="2.900" fill="#0b0e0c"/><ellipse cx="17.800" cy="6.500" rx="2" ry="1.500" fill="#9cc4dc" opacity=".8"/><ellipse cx="10.300" cy="12.800" rx="2.700" ry="3.900" fill="#7b4458"/><circle cx="11" cy="12.200" r="1.100" fill="#dba064"/><path d="M11.600 14.500h3v6.800h-3z" fill="#26302b"/><circle cx="19.200" cy="12" r="1.700" fill="#3f9159"/><circle cx="17.200" cy="15.500" r=".9" fill="#3f9159"/><circle cx="20" cy="7.500" r="1" fill="#2f7a48"/><circle cx="4" cy="10.500" r="1.100" fill="#f2a2c4"/><circle cx="5.200" cy="11.800" r="1" fill="#dfa070"/><circle cx="4" cy="13.500" r=".6" fill="#f2a2c4"/><circle cx="7.300" cy="17.500" r=".7" fill="#49a05f"/><ellipse cx="16.500" cy="20" rx="2.500" ry="1.600" fill="#a9d3ee"/><path d="M2 8l2-3 1 2z" fill="#4a6a5a"/></g></svg>
<div class="tag" style="left:1389px;top:229px;background:#a5ecb6;padding:0 5px 0 5.500px;letter-spacing:-.13px">Approval passed</div>
<div class="pill" style="left:1531px;top:229px">Zhang Xiuhua</div>
<svg style="left:1531px;top:228px" width="22" height="22" viewBox="0 0 22 22"><defs><clipPath id="c2"><circle cx="11" cy="11" r="11"/></clipPath></defs><g clip-path="url(#c2)"><rect width="22" height="22" fill="#151817"/><path d="M12.500 0H22v22h-7.500l2-6-1-5.500-2.500-4z" fill="#9aa5a8"/><path d="M6 1.500h3.200v8H6z" fill="#39433f"/><path d="M9.200 4.500c0-3.200 4.400-3.200 4.400 0l1.800 8h-7z" fill="#0d0f0e"/><ellipse cx="11.400" cy="6.300" rx="1.700" ry="2.900" fill="#c99a88"/><path d="M9.700 3.800c.5-1.600 3-1.600 3.400 0-1-.6-2.400-.6-3.400 0z" fill="#0d0f0e"/><path d="M10.500 8.800h1.700v2.700h-1.700z" fill="#b98a7c"/><path d="M5.800 15.200h1.700v5.600H5.800z" fill="#c99a88"/><path d="M6 19.500h3.200v1.600H6z" fill="#c99a88"/><path d="M9.800 18.300h5.700V20H9.800z" fill="#f0a3cf"/><path d="M9 15.200h4v.8H9z" fill="#b5b8b7"/><path d="M14.500 15h1.300v4h-1.300z" fill="#c99a88" opacity=".7"/></g></svg>
<div class="tag" style="left:1677px;top:229px;background:#a5ecb6;padding:0 5px 0 5.500px;letter-spacing:-.13px">Approval passed</div>
<div class="t" style="left:258px;width:40px;text-align:center;top:265px">2</div>
<div class="t" style="left:368px;top:265px">RK-4</div>
<div class="tag" style="left:494px;top:265px;background:#fcb3da">effective</div>
<div class="t" style="left:636px;top:265px">2020-12-11</div>
<div class="abs" style="left:780px;top:265px;width:168px;height:20px;overflow:hidden;white-space:nowrap"><span style="display:inline-block;height:20px;line-height:20px;background:#c5edfc;border-radius:2px;padding:0 8px;margin-right:10px;font-size:14px">Shoe cabinet - 200</span><span style="display:inline-block;height:20px;line-height:20px;background:#c5edfc;border-radius:2px;padding:0 8px;margin-right:10px;font-size:14px">Profile 4-400</span></div>
<div class="t" style="left:955px;top:265px;letter-spacing:-.2px">605.00</div>
<div class="t" style="left:1099px;top:265px;letter-spacing:-.2px">100.00</div>
<div class="pill" style="left:1243px;top:265px">Liu Luliang</div>
<svg style="left:1243px;top:264px" width="22" height="22" viewBox="0 0 22 22"><defs><clipPath id="c"><circle cx="11" cy="11" r="11"/></clipPath></defs><g clip-path="url(#c)"><rect width="22" height="22" fill="#f1f5f7"/><circle cx="11" cy="11" r="10.500" fill="none" stroke="#c5e2f4" stroke-width="1"/><ellipse cx="13.800" cy="3.200" rx="4" ry="3.200" fill="#1f2c28"/><path d="M14 5.500L22 4v15.500l-5 .5-3-6z" fill="#17211c"/><ellipse cx="10.600" cy="7.600" rx="5.300" ry="2.900" fill="#0b0e0c"/><ellipse cx="17.800" cy="6.500" rx="2" ry="1.500" fill="#9cc4dc" opacity=".8"/><ellipse cx="10.300" cy="12.800" rx="2.700" ry="3.900" fill="#7b4458"/><circle cx="11" cy="12.200" r="1.100" fill="#dba064"/><path d="M11.600 14.500h3v6.800h-3z" fill="#26302b"/><circle cx="19.200" cy="12" r="1.700" fill="#3f9159"/><circle cx="17.200" cy="15.500" r=".9" fill="#3f9159"/><circle cx="20" cy="7.500" r="1" fill="#2f7a48"/><circle cx="4" cy="10.500" r="1.100" fill="#f2a2c4"/><circle cx="5.200" cy="11.800" r="1" fill="#dfa070"/><circle cx="4" cy="13.500" r=".6" fill="#f2a2c4"/><circle cx="7.300" cy="17.500" r=".7" fill="#49a05f"/><ellipse cx="16.500" cy="20" rx="2.500" ry="1.600" fill="#a9d3ee"/><path d="M2 8l2-3 1 2z" fill="#4a6a5a"/></g></svg>
<div class="tag" style="left:1389px;top:265px;background:#a5ecb6;padding:0 5px 0 5.500px;letter-spacing:-.13px">Approval passed</div>
<div class="pill" style="left:1531px;top:265px">Zhang Xiuhua</div>
<svg style="left:1531px;top:264px" width="22" height="22" viewBox="0 0 22 22"><defs><clipPath id="c2"><circle cx="11" cy="11" r="11"/></clipPath></defs><g clip-path="url(#c2)"><rect width="22" height="22" fill="#151817"/><path d="M12.500 0H22v22h-7.500l2-6-1-5.500-2.500-4z" fill="#9aa5a8"/><path d="M6 1.500h3.200v8H6z" fill="#39433f"/><path d="M9.200 4.500c0-3.200 4.400-3.200 4.400 0l1.800 8h-7z" fill="#0d0f0e"/><ellipse cx="11.400" cy="6.300" rx="1.700" ry="2.900" fill="#c99a88"/><path d="M9.700 3.800c.5-1.600 3-1.600 3.400 0-1-.6-2.400-.6-3.400 0z" fill="#0d0f0e"/><path d="M10.500 8.800h1.700v2.700h-1.700z" fill="#b98a7c"/><path d="M5.800 15.200h1.700v5.600H5.800z" fill="#c99a88"/><path d="M6 19.500h3.200v1.600H6z" fill="#c99a88"/><path d="M9.800 18.300h5.700V20H9.800z" fill="#f0a3cf"/><path d="M9 15.200h4v.8H9z" fill="#b5b8b7"/><path d="M14.500 15h1.300v4h-1.300z" fill="#c99a88" opacity=".7"/></g></svg>
<div class="tag" style="left:1677px;top:265px;background:#a5ecb6;padding:0 5px 0 5.500px;letter-spacing:-.13px">Approval passed</div>
<div class="t" style="left:258px;width:40px;text-align:center;top:301px">3</div>
<div class="t" style="left:368px;top:301px">RK-9</div>
<div class="tag" style="left:494px;top:301px;background:#fcb3da">effective</div>
<div class="t" style="left:636px;top:301px">2020-12-11</div>
<div class="abs" style="left:780px;top:301px;width:168px;height:20px;overflow:hidden;white-space:nowrap"><span style="display:inline-block;height:20px;line-height:20px;background:#c5edfc;border-radius:2px;padding:0 8px;margin-right:10px;font-size:14px">Drawers - 100</span></div>
<div class="t" style="left:955px;top:301px;letter-spacing:-.2px">100.00</div>
<div class="t" style="left:1099px;top:301px;letter-spacing:-.2px">80.00</div>
<div class="pill" style="left:1243px;top:301px">Liu Luliang</div>
<svg style="left:1243px;top:300px" width="22" height="22" viewBox="0 0 22 22"><defs><clipPath id="c"><circle cx="11" cy="11" r="11"/></clipPath></defs><g clip-path="url(#c)"><rect width="22" height="22" fill="#f1f5f7"/><circle cx="11" cy="11" r="10.500" fill="none" stroke="#c5e2f4" stroke-width="1"/><ellipse cx="13.800" cy="3.200" rx="4" ry="3.200" fill="#1f2c28"/><path d="M14 5.500L22 4v15.500l-5 .5-3-6z" fill="#17211c"/><ellipse cx="10.600" cy="7.600" rx="5.300" ry="2.900" fill="#0b0e0c"/><ellipse cx="17.800" cy="6.500" rx="2" ry="1.500" fill="#9cc4dc" opacity=".8"/><ellipse cx="10.300" cy="12.800" rx="2.700" ry="3.900" fill="#7b4458"/><circle cx="11" cy="12.200" r="1.100" fill="#dba064"/><path d="M11.600 14.500h3v6.800h-3z" fill="#26302b"/><circle cx="19.200" cy="12" r="1.700" fill="#3f9159"/><circle cx="17.200" cy="15.500" r=".9" fill="#3f9159"/><circle cx="20" cy="7.500" r="1" fill="#2f7a48"/><circle cx="4" cy="10.500" r="1.100" fill="#f2a2c4"/><circle cx="5.200" cy="11.800" r="1" fill="#dfa070"/><circle cx="4" cy="13.500" r=".6" fill="#f2a2c4"/><circle cx="7.300" cy="17.500" r=".7" fill="#49a05f"/><ellipse cx="16.500" cy="20" rx="2.500" ry="1.600" fill="#a9d3ee"/><path d="M2 8l2-3 1 2z" fill="#4a6a5a"/></g></svg>
<div class="tag" style="left:1389px;top:301px;background:#a5ecb6;padding:0 5px 0 5.500px;letter-spacing:-.13px">Approval passed</div>
<div class="pill" style="left:1531px;top:301px">Zhang Xiuhua</div>
<svg style="left:1531px;top:300px" width="22" height="22" viewBox="0 0 22 22"><defs><clipPath id="c2"><circle cx="11" cy="11" r="11"/></clipPath></defs><g clip-path="url(#c2)"><rect width="22" height="22" fill="#151817"/><path d="M12.500 0H22v22h-7.500l2-6-1-5.500-2.500-4z" fill="#9aa5a8"/><path d="M6 1.500h3.200v8H6z" fill="#39433f"/><path d="M9.200 4.500c0-3.200 4.400-3.200 4.400 0l1.800 8h-7z" fill="#0d0f0e"/><ellipse cx="11.400" cy="6.300" rx="1.700" ry="2.900" fill="#c99a88"/><path d="M9.700 3.800c.5-1.600 3-1.600 3.400 0-1-.6-2.400-.6-3.400 0z" fill="#0d0f0e"/><path d="M10.500 8.800h1.700v2.700h-1.700z" fill="#b98a7c"/><path d="M5.800 15.200h1.700v5.600H5.800z" fill="#c99a88"/><path d="M6 19.500h3.200v1.600H6z" fill="#c99a88"/><path d="M9.800 18.300h5.700V20H9.800z" fill="#f0a3cf"/><path d="M9 15.200h4v.8H9z" fill="#b5b8b7"/><path d="M14.500 15h1.300v4h-1.300z" fill="#c99a88" opacity=".7"/></g></svg>
<div class="tag" style="left:1677px;top:301px;background:#a5ecb6;padding:0 5px 0 5.500px;letter-spacing:-.13px">Approval passed</div>
<div class="t" style="left:258px;width:40px;text-align:center;top:337px">4</div>
<div class="t" style="left:368px;top:337px">RK-2</div>
<div class="tag" style="left:494px;top:337px;background:#fcb3da">effective</div>
<div class="t" style="left:636px;top:337px">2020-12-11</div>
<div class="abs" style="left:780px;top:337px;width:168px;height:20px;overflow:hidden;white-space:nowrap"><span style="display:inline-block;height:20px;line-height:20px;background:#c5edfc;border-radius:2px;padding:0 8px;margin-right:10px;font-size:14px">Profile 4-400</span><span style="display:inline-block;height:20px;line-height:20px;background:#c5edfc;border-radius:2px;padding:0 8px;margin-right:10px;font-size:14px">Wardrobe - 100</span></div>
<div class="t" style="left:955px;top:337px;letter-spacing:-.2px">500.00</div>
<div class="t" style="left:1099px;top:337px;letter-spacing:-.2px">400.00</div>
<div class="pill" style="left:1243px;top:337px">Liu Luliang</div>
<svg style="left:1243px;top:336px" width="22" height="22" viewBox="0 0 22 22"><defs><clipPath id="c"><circle cx="11" cy="11" r="11"/></clipPath></defs><g clip-path="url(#c)"><rect width="22" height="22" fill="#f1f5f7"/><circle cx="11" cy="11" r="10.500" fill="none" stroke="#c5e2f4" stroke-width="1"/><ellipse cx="13.800" cy="3.200" rx="4" ry="3.200" fill="#1f2c28"/><path d="M14 5.500L22 4v15.500l-5 .5-3-6z" fill="#17211c"/><ellipse cx="10.600" cy="7.600" rx="5.300" ry="2.900" fill="#0b0e0c"/><ellipse cx="17.800" cy="6.500" rx="2" ry="1.500" fill="#9cc4dc" opacity=".8"/><ellipse cx="10.300" cy="12.800" rx="2.700" ry="3.900" fill="#7b4458"/><circle cx="11" cy="12.200" r="1.100" fill="#dba064"/><path d="M11.600 14.500h3v6.800h-3z" fill="#26302b"/><circle cx="19.200" cy="12" r="1.700" fill="#3f9159"/><circle cx="17.200" cy="15.500" r=".9" fill="#3f9159"/><circle cx="20" cy="7.500" r="1" fill="#2f7a48"/><circle cx="4" cy="10.500" r="1.100" fill="#f2a2c4"/><circle cx="5.200" cy="11.800" r="1" fill="#dfa070"/><circle cx="4" cy="13.500" r=".6" fill="#f2a2c4"/><circle cx="7.300" cy="17.500" r=".7" fill="#49a05f"/><ellipse cx="16.500" cy="20" rx="2.500" ry="1.600" fill="#a9d3ee"/><path d="M2 8l2-3 1 2z" fill="#4a6a5a"/></g></svg>
<div class="tag" style="left:1389px;top:337px;background:#a5ecb6;padding:0 5px 0 5.500px;letter-spacing:-.13px">Approval passed</div>
<div class="pill" style="left:1531px;top:337px">Zhang Xiuhua</div>
<svg style="left:1531px;top:336px" width="22" height="22" viewBox="0 0 22 22"><defs><clipPath id="c2"><circle cx="11" cy="11" r="11"/></clipPath></defs><g clip-path="url(#c2)"><rect width="22" height="22" fill="#151817"/><path d="M12.500 0H22v22h-7.500l2-6-1-5.500-2.500-4z" fill="#9aa5a8"/><path d="M6 1.500h3.200v8H6z" fill="#39433f"/><path d="M9.200 4.500c0-3.200 4.400-3.200 4.400 0l1.800 8h-7z" fill="#0d0f0e"/><ellipse cx="11.400" cy="6.300" rx="1.700" ry="2.900" fill="#c99a88"/><path d="M9.700 3.800c.5-1.600 3-1.600 3.400 0-1-.6-2.400-.6-3.400 0z" fill="#0d0f0e"/><path d="M10.500 8.800h1.700v2.700h-1.700z" fill="#b98a7c"/><path d="M5.800 15.200h1.700v5.600H5.800z" fill="#c99a88"/><path d="M6 19.500h3.200v1.600H6z" fill="#c99a88"/><path d="M9.800 18.300h5.700V20H9.800z" fill="#f0a3cf"/><path d="M9 15.200h4v.8H9z" fill="#b5b8b7"/><path d="M14.500 15h1.300v4h-1.300z" fill="#c99a88" opacity=".7"/></g></svg>
<div class="tag" style="left:1677px;top:337px;background:#a5ecb6;padding:0 5px 0 5.500px;letter-spacing:-.13px">Approval passed</div>
<div class="t" style="left:258px;width:40px;text-align:center;top:373px">5</div>
<div class="t" style="left:368px;top:373px">RK-5</div>
<div class="tag" style="left:494px;top:373px;background:#ffb6c6">Void</div>
<div class="t" style="left:636px;top:373px">2020-12-14</div>
<div class="abs" style="left:780px;top:373px;width:168px;height:20px;overflow:hidden;white-space:nowrap"><span style="display:inline-block;height:20px;line-height:20px;background:#c5edfc;border-radius:2px;padding:0 8px;margin-right:10px;font-size:14px">Drawer - 5</span><span style="display:inline-block;height:20px;line-height:20px;background:#c5edfc;border-radius:2px;padding:0 8px;margin-right:10px;font-size:14px">Wardrobe-1</span></div>
<div class="t" style="left:955px;top:373px;letter-spacing:-.2px">10.00</div>
<div class="t" style="left:1099px;top:373px;letter-spacing:-.2px">5.00</div>
<div class="pill" style="left:1243px;top:373px">Liu Luliang</div>
<svg style="left:1243px;top:372px" width="22" height="22" viewBox="0 0 22 22"><defs><clipPath id="c"><circle cx="11" cy="11" r="11"/></clipPath></defs><g clip-path="url(#c)"><rect width="22" height="22" fill="#f1f5f7"/><circle cx="11" cy="11" r="10.500" fill="none" stroke="#c5e2f4" stroke-width="1"/><ellipse cx="13.800" cy="3.200" rx="4" ry="3.200" fill="#1f2c28"/><path d="M14 5.500L22 4v15.500l-5 .5-3-6z" fill="#17211c"/><ellipse cx="10.600" cy="7.600" rx="5.300" ry="2.900" fill="#0b0e0c"/><ellipse cx="17.800" cy="6.500" rx="2" ry="1.500" fill="#9cc4dc" opacity=".8"/><ellipse cx="10.300" cy="12.800" rx="2.700" ry="3.900" fill="#7b4458"/><circle cx="11" cy="12.200" r="1.100" fill="#dba064"/><path d="M11.600 14.500h3v6.800h-3z" fill="#26302b"/><circle cx="19.200" cy="12" r="1.700" fill="#3f9159"/><circle cx="17.200" cy="15.500" r=".9" fill="#3f9159"/><circle cx="20" cy="7.500" r="1" fill="#2f7a48"/><circle cx="4" cy="10.500" r="1.100" fill="#f2a2c4"/><circle cx="5.200" cy="11.800" r="1" fill="#dfa070"/><circle cx="4" cy="13.500" r=".6" fill="#f2a2c4"/><circle cx="7.300" cy="17.500" r=".7" fill="#49a05f"/><ellipse cx="16.500" cy="20" rx="2.500" ry="1.600" fill="#a9d3ee"/><path d="M2 8l2-3 1 2z" fill="#4a6a5a"/></g></svg>
<div class="tag" style="left:1389px;top:373px;background:#a5ecb6;padding:0 5px 0 5.500px;letter-spacing:-.13px">Approval passed</div>
<div class="pill" style="left:1531px;top:373px">Zhang Xiuhua</div>
<svg style="left:1531px;top:372px" width="22" height="22" viewBox="0 0 22 22"><defs><clipPath id="c2"><circle cx="11" cy="11" r="11"/></clipPath></defs><g clip-path="url(#c2)"><rect width="22" height="22" fill="#151817"/><path d="M12.500 0H22v22h-7.500l2-6-1-5.500-2.500-4z" fill="#9aa5a8"/><path d="M6 1.500h3.200v8H6z" fill="#39433f"/><path d="M9.200 4.500c0-3.200 4.400-3.200 4.400 0l1.800 8h-7z" fill="#0d0f0e"/><ellipse cx="11.400" cy="6.300" rx="1.700" ry="2.900" fill="#c99a88"/><path d="M9.700 3.800c.5-1.600 3-1.600 3.400 0-1-.6-2.400-.6-3.400 0z" fill="#0d0f0e"/><path d="M10.500 8.800h1.700v2.700h-1.700z" fill="#b98a7c"/><path d="M5.800 15.200h1.700v5.600H5.800z" fill="#c99a88"/><path d="M6 19.500h3.200v1.600H6z" fill="#c99a88"/><path d="M9.800 18.300h5.700V20H9.800z" fill="#f0a3cf"/><path d="M9 15.200h4v.8H9z" fill="#b5b8b7"/><path d="M14.500 15h1.300v4h-1.300z" fill="#c99a88" opacity=".7"/></g></svg>
<div class="tag" style="left:1677px;top:373px;background:#a5ecb6;padding:0 5px 0 5.500px;letter-spacing:-.13px">Approval passed</div>
<div class="t" style="left:258px;width:40px;text-align:center;top:409px">6</div>
<div class="t" style="left:368px;top:409px">RK-6</div>
<div class="tag" style="left:494px;top:409px;background:#ffb6c6">Void</div>
<div class="t" style="left:636px;top:409px">2020-12-16</div>
<div class="abs" style="left:780px;top:409px;width:168px;height:20px;overflow:hidden;white-space:nowrap"><span style="display:inline-block;height:20px;line-height:20px;background:#c5edfc;border-radius:2px;padding:0 8px;margin-right:10px;font-size:14px">Wardrobe-1</span></div>
<div class="t" style="left:955px;top:409px;letter-spacing:-.2px">5.00</div>
<div class="t" style="left:1099px;top:409px;letter-spacing:-.2px">0.00</div>
<div class="pill" style="left:1243px;top:409px">Liu Luliang</div>
<svg style="left:1243px;top:408px" width="22" height="22" viewBox="0 0 22 22"><defs><clipPath id="c"><circle cx="11" cy="11" r="11"/></clipPath></defs><g clip-path="url(#c)"><rect width="22" height="22" fill="#f1f5f7"/><circle cx="11" cy="11" r="10.500" fill="none" stroke="#c5e2f4" stroke-width="1"/><ellipse cx="13.800" cy="3.200" rx="4" ry="3.200" fill="#1f2c28"/><path d="M14 5.500L22 4v15.500l-5 .5-3-6z" fill="#17211c"/><ellipse cx="10.600" cy="7.600" rx="5.300" ry="2.900" fill="#0b0e0c"/><ellipse cx="17.800" cy="6.500" rx="2" ry="1.500" fill="#9cc4dc" opacity=".8"/><ellipse cx="10.300" cy="12.800" rx="2.700" ry="3.900" fill="#7b4458"/><circle cx="11" cy="12.200" r="1.100" fill="#dba064"/><path d="M11.600 14.500h3v6.800h-3z" fill="#26302b"/><circle cx="19.200" cy="12" r="1.700" fill="#3f9159"/><circle cx="17.200" cy="15.500" r=".9" fill="#3f9159"/><circle cx="20" cy="7.500" r="1" fill="#2f7a48"/><circle cx="4" cy="10.500" r="1.100" fill="#f2a2c4"/><circle cx="5.200" cy="11.800" r="1" fill="#dfa070"/><circle cx="4" cy="13.500" r=".6" fill="#f2a2c4"/><circle cx="7.300" cy="17.500" r=".7" fill="#49a05f"/><ellipse cx="16.500" cy="20" rx="2.500" ry="1.600" fill="#a9d3ee"/><path d="M2 8l2-3 1 2z" fill="#4a6a5a"/></g></svg>
<div class="tag" style="left:1389px;top:409px;background:#a5ecb6;padding:0 5px 0 5.500px;letter-spacing:-.13px">Approval passed</div>
<div class="pill" style="left:1531px;top:409px">Zhang Xiuhua</div>
<svg style="left:1531px;top:408px" width="22" height="22" viewBox="0 0 22 22"><defs><clipPath id="c2"><circle cx="11" cy="11" r="11"/></clipPath></defs><g clip-path="url(#c2)"><rect width="22" height="22" fill="#151817"/><path d="M12.500 0H22v22h-7.500l2-6-1-5.500-2.500-4z" fill="#9aa5a8"/><path d="M6 1.500h3.200v8H6z" fill="#39433f"/><path d="M9.200 4.500c0-3.200 4.400-3.200 4.400 0l1.800 8h-7z" fill="#0d0f0e"/><ellipse cx="11.400" cy="6.300" rx="1.700" ry="2.900" fill="#c99a88"/><path d="M9.700 3.800c.5-1.600 3-1.600 3.400 0-1-.6-2.400-.6-3.400 0z" fill="#0d0f0e"/><path d="M10.500 8.800h1.700v2.700h-1.700z" fill="#b98a7c"/><path d="M5.800 15.200h1.700v5.600H5.800z" fill="#c99a88"/><path d="M6 19.500h3.200v1.600H6z" fill="#c99a88"/><path d="M9.800 18.300h5.700V20H9.800z" fill="#f0a3cf"/><path d="M9 15.200h4v.8H9z" fill="#b5b8b7"/><path d="M14.500 15h1.300v4h-1.300z" fill="#c99a88" opacity=".7"/></g></svg>
<div class="tag" style="left:1677px;top:409px;background:#a5ecb6;padding:0 5px 0 5.500px;letter-spacing:-.13px">Approval passed</div>
<div class="t" style="left:258px;width:40px;text-align:center;top:445px">7</div>
<div class="t" style="left:368px;top:445px">RK-10</div>
<div class="tag" style="left:494px;top:445px;background:#fcb3da">effective</div>
<div class="t" style="left:636px;top:445px">2020-12-10</div>
<div class="abs" style="left:780px;top:445px;width:168px;height:20px;overflow:hidden;white-space:nowrap"><span style="display:inline-block;height:20px;line-height:20px;background:#c5edfc;border-radius:2px;padding:0 8px;margin-right:10px;font-size:14px">25 cents light South America</span></div>
<div class="t" style="left:955px;top:445px;letter-spacing:-.2px">23040.00</div>
<div class="t" style="left:1099px;top:445px;letter-spacing:-.2px">0.00</div>
<div class="pill" style="left:1243px;top:445px">Liu Luliang</div>
<svg style="left:1243px;top:444px" width="22" height="22" viewBox="0 0 22 22"><defs><clipPath id="c"><circle cx="11" cy="11" r="11"/></clipPath></defs><g clip-path="url(#c)"><rect width="22" height="22" fill="#f1f5f7"/><circle cx="11" cy="11" r="10.500" fill="none" stroke="#c5e2f4" stroke-width="1"/><ellipse cx="13.800" cy="3.200" rx="4" ry="3.200" fill="#1f2c28"/><path d="M14 5.500L22 4v15.500l-5 .5-3-6z" fill="#17211c"/><ellipse cx="10.600" cy="7.600" rx="5.300" ry="2.900" fill="#0b0e0c"/><ellipse cx="17.800" cy="6.500" rx="2" ry="1.500" fill="#9cc4dc" opacity=".8"/><ellipse cx="10.300" cy="12.800" rx="2.700" ry="3.900" fill="#7b4458"/><circle cx="11" cy="12.200" r="1.100" fill="#dba064"/><path d="M11.600 14.500h3v6.800h-3z" fill="#26302b"/><circle cx="19.200" cy="12" r="1.700" fill="#3f9159"/><circle cx="17.200" cy="15.500" r=".9" fill="#3f9159"/><circle cx="20" cy="7.500" r="1" fill="#2f7a48"/><circle cx="4" cy="10.500" r="1.100" fill="#f2a2c4"/><circle cx="5.200" cy="11.800" r="1" fill="#dfa070"/><circle cx="4" cy="13.500" r=".6" fill="#f2a2c4"/><circle cx="7.300" cy="17.500" r=".7" fill="#49a05f"/><ellipse cx="16.500" cy="20" rx="2.500" ry="1.600" fill="#a9d3ee"/><path d="M2 8l2-3 1 2z" fill="#4a6a5a"/></g></svg>
<div class="tag" style="left:1389px;top:445px;background:#a5ecb6;padding:0 5px 0 5.500px;letter-spacing:-.13px">Approval passed</div>
<div class="pill" style="left:1531px;top:445px">Zhang Xiuhua</div>
<svg style="left:1531px;top:444px" width="22" height="22" viewBox="0 0 22 22"><defs><clipPath id="c2"><circle cx="11" cy="11" r="11"/></clipPath></defs><g clip-path="url(#c2)"><rect width="22" height="22" fill="#151817"/><path d="M12.500 0H22v22h-7.500l2-6-1-5.500-2.500-4z" fill="#9aa5a8"/><path d="M6 1.500h3.200v8H6z" fill="#39433f"/><path d="M9.200 4.500c0-3.200 4.400-3.200 4.400 0l1.800 8h-7z" fill="#0d0f0e"/><ellipse cx="11.400" cy="6.300" rx="1.700" ry="2.900" fill="#c99a88"/><path d="M9.700 3.800c.5-1.600 3-1.600 3.400 0-1-.6-2.400-.6-3.400 0z" fill="#0d0f0e"/><path d="M10.500 8.800h1.700v2.700h-1.700z" fill="#b98a7c"/><path d="M5.800 15.200h1.700v5.600H5.800z" fill="#c99a88"/><path d="M6 19.500h3.200v1.600H6z" fill="#c99a88"/><path d="M9.800 18.300h5.700V20H9.800z" fill="#f0a3cf"/><path d="M9 15.200h4v.8H9z" fill="#b5b8b7"/><path d="M14.500 15h1.300v4h-1.300z" fill="#c99a88" opacity=".7"/></g></svg>
<div class="tag" style="left:1677px;top:445px;background:#a5ecb6;padding:0 5px 0 5.500px;letter-spacing:-.13px">Approval passed</div>
<div class="t" style="left:258px;width:40px;text-align:center;top:481px">8</div>
<div class="t" style="left:368px;top:481px">RK-7</div>
<div class="tag" style="left:494px;top:481px;background:#fcb3da">effective</div>
<div class="t" style="left:636px;top:481px">2020-12-07</div>
<div class="abs" style="left:780px;top:481px;width:168px;height:20px;overflow:hidden;white-space:nowrap"><span style="display:inline-block;height:20px;line-height:20px;background:#c5edfc;border-radius:2px;padding:0 8px;margin-right:10px;font-size:14px">9% gold silk marg-50</span><span style="display:inline-block;height:20px;line-height:20px;background:#c5edfc;border-radius:2px;padding:0 8px;margin-right:10px;font-size:14px">9% gold</span></div>
<div class="t" style="left:955px;top:481px;letter-spacing:-.2px">9490.00</div>
<div class="t" style="left:1099px;top:481px;letter-spacing:-.2px">0.00</div>
<div class="pill" style="left:1243px;top:481px">Liu Luliang</div>
<svg style="left:1243px;top:480px" width="22" height="22" viewBox="0 0 22 22"><defs><clipPath id="c"><circle cx="11" cy="11" r="11"/></clipPath></defs><g clip-path="url(#c)"><rect width="22" height="22" fill="#f1f5f7"/><circle cx="11" cy="11" r="10.500" fill="none" stroke="#c5e2f4" stroke-width="1"/><ellipse cx="13.800" cy="3.200" rx="4" ry="3.200" fill="#1f2c28"/><path d="M14 5.500L22 4v15.500l-5 .5-3-6z" fill="#17211c"/><ellipse cx="10.600" cy="7.600" rx="5.300" ry="2.900" fill="#0b0e0c"/><ellipse cx="17.800" cy="6.500" rx="2" ry="1.500" fill="#9cc4dc" opacity=".8"/><ellipse cx="10.300" cy="12.800" rx="2.700" ry="3.900" fill="#7b4458"/><circle cx="11" cy="12.200" r="1.100" fill="#dba064"/><path d="M11.600 14.500h3v6.800h-3z" fill="#26302b"/><circle cx="19.200" cy="12" r="1.700" fill="#3f9159"/><circle cx="17.200" cy="15.500" r=".9" fill="#3f9159"/><circle cx="20" cy="7.500" r="1" fill="#2f7a48"/><circle cx="4" cy="10.500" r="1.100" fill="#f2a2c4"/><circle cx="5.200" cy="11.800" r="1" fill="#dfa070"/><circle cx="4" cy="13.500" r=".6" fill="#f2a2c4"/><circle cx="7.300" cy="17.500" r=".7" fill="#49a05f"/><ellipse cx="16.500" cy="20" rx="2.500" ry="1.600" fill="#a9d3ee"/><path d="M2 8l2-3 1 2z" fill="#4a6a5a"/></g></svg>
<div class="tag" style="left:1389px;top:481px;background:#a5ecb6;padding:0 5px 0 5.500px;letter-spacing:-.13px">Approval passed</div>
<div class="pill" style="left:1531px;top:481px">Zhang Xiuhua</div>
<svg style="left:1531px;top:480px" width="22" height="22" viewBox="0 0 22 22"><defs><clipPath id="c2"><circle cx="11" cy="11" r="11"/></clipPath></defs><g clip-path="url(#c2)"><rect width="22" height="22" fill="#151817"/><path d="M12.500 0H22v22h-7.500l2-6-1-5.500-2.500-4z" fill="#9aa5a8"/><path d="M6 1.500h3.200v8H6z" fill="#39433f"/><path d="M9.200 4.500c0-3.200 4.400-3.200 4.400 0l1.800 8h-7z" fill="#0d0f0e"/><ellipse cx="11.400" cy="6.300" rx="1.700" ry="2.900" fill="#c99a88"/><path d="M9.700 3.800c.5-1.600 3-1.600 3.400 0-1-.6-2.400-.6-3.400 0z" fill="#0d0f0e"/><path d="M10.500 8.800h1.700v2.700h-1.700z" fill="#b98a7c"/><path d="M5.800 15.200h1.700v5.600H5.800z" fill="#c99a88"/><path d="M6 19.500h3.200v1.600H6z" fill="#c99a88"/><path d="M9.800 18.300h5.700V20H9.800z" fill="#f0a3cf"/><path d="M9 15.200h4v.8H9z" fill="#b5b8b7"/><path d="M14.500 15h1.300v4h-1.300z" fill="#c99a88" opacity=".7"/></g></svg>
<div class="tag" style="left:1677px;top:481px;background:#a5ecb6;padding:0 5px 0 5.500px;letter-spacing:-.13px">Approval passed</div>
<div class="t" style="left:258px;width:40px;text-align:center;top:517px">9</div>
<div class="t" style="left:368px;top:517px">RK-8</div>
<div class="tag" style="left:494px;top:517px;background:#fcb3da">effective</div>
<div class="t" style="left:636px;top:517px">2020-09-13</div>
<div class="abs" style="left:780px;top:517px;width:168px;height:20px;overflow:hidden;white-space:nowrap"><span style="display:inline-block;height:20px;line-height:20px;background:#c5edfc;border-radius:2px;padding:0 8px;margin-right:10px;font-size:14px">18% double-sided ebony c</span></div>
<div class="t" style="left:955px;top:517px;letter-spacing:-.2px">17500.00</div>
<div class="t" style="left:1099px;top:517px;letter-spacing:-.2px">0.00</div>
<div class="pill" style="left:1243px;top:517px">Liu Luliang</div>
<svg style="left:1243px;top:516px" width="22" height="22" viewBox="0 0 22 22"><defs><clipPath id="c"><circle cx="11" cy="11" r="11"/></clipPath></defs><g clip-path="url(#c)"><rect width="22" height="22" fill="#f1f5f7"/><circle cx="11" cy="11" r="10.500" fill="none" stroke="#c5e2f4" stroke-width="1"/><ellipse cx="13.800" cy="3.200" rx="4" ry="3.200" fill="#1f2c28"/><path d="M14 5.500L22 4v15.500l-5 .5-3-6z" fill="#17211c"/><ellipse cx="10.600" cy="7.600" rx="5.300" ry="2.900" fill="#0b0e0c"/><ellipse cx="17.800" cy="6.500" rx="2" ry="1.500" fill="#9cc4dc" opacity=".8"/><ellipse cx="10.300" cy="12.800" rx="2.700" ry="3.900" fill="#7b4458"/><circle cx="11" cy="12.200" r="1.100" fill="#dba064"/><path d="M11.600 14.500h3v6.800h-3z" fill="#26302b"/><circle cx="19.200" cy="12" r="1.700" fill="#3f9159"/><circle cx="17.200" cy="15.500" r=".9" fill="#3f9159"/><circle cx="20" cy="7.500" r="1" fill="#2f7a48"/><circle cx="4" cy="10.500" r="1.100" fill="#f2a2c4"/><circle cx="5.200" cy="11.800" r="1" fill="#dfa070"/><circle cx="4" cy="13.500" r=".6" fill="#f2a2c4"/><circle cx="7.300" cy="17.500" r=".7" fill="#49a05f"/><ellipse cx="16.500" cy="20" rx="2.500" ry="1.600" fill="#a9d3ee"/><path d="M2 8l2-3 1 2z" fill="#4a6a5a"/></g></svg>
<div class="tag" style="left:1389px;top:517px;background:#a5ecb6;padding:0 5px 0 5.500px;letter-spacing:-.13px">Approval passed</div>
<div class="pill" style="left:1531px;top:517px">Zhang Xiuhua</div>
<svg style="left:1531px;top:516px" width="22" height="22" viewBox="0 0 22 22"><defs><clipPath id="c2"><circle cx="11" cy="11" r="11"/></clipPath></defs><g clip-path="url(#c2)"><rect width="22" height="22" fill="#151817"/><path d="M12.500 0H22v22h-7.500l2-6-1-5.500-2.500-4z" fill="#9aa5a8"/><path d="M6 1.500h3.200v8H6z" fill="#39433f"/><path d="M9.200 4.500c0-3.200 4.400-3.200 4.400 0l1.800 8h-7z" fill="#0d0f0e"/><ellipse cx="11.400" cy="6.300" rx="1.700" ry="2.900" fill="#c99a88"/><path d="M9.700 3.800c.5-1.600 3-1.600 3.400 0-1-.6-2.400-.6-3.400 0z" fill="#0d0f0e"/><path d="M10.500 8.800h1.700v2.700h-1.700z" fill="#b98a7c"/><path d="M5.800 15.200h1.700v5.600H5.800z" fill="#c99a88"/><path d="M6 19.500h3.200v1.600H6z" fill="#c99a88"/><path d="M9.800 18.300h5.700V20H9.800z" fill="#f0a3cf"/><path d="M9 15.200h4v.8H9z" fill="#b5b8b7"/><path d="M14.500 15h1.300v4h-1.300z" fill="#c99a88" opacity=".7"/></g></svg>
<div class="tag" style="left:1677px;top:517px;background:#a5ecb6;padding:0 5px 0 5.500px;letter-spacing:-.13px">Approval passed</div>
<div class="t" style="left:258px;width:40px;text-align:center;top:553px">10</div>
<div class="t" style="left:368px;top:553px">RK-1</div>
<div class="tag" style="left:494px;top:553px;background:#fcb3da">effective</div>
<div class="t" style="left:636px;top:553px">2020-10-10</div>
<div class="abs" style="left:780px;top:553px;width:168px;height:20px;overflow:hidden;white-space:nowrap"><span style="display:inline-block;height:20px;line-height:20px;background:#c5edfc;border-radius:2px;padding:0 8px;margin-right:10px;font-size:14px">18% double-sided ebony c</span></div>
<div class="t" style="left:955px;top:553px;letter-spacing:-.2px">40850.00</div>
<div class="t" style="left:1099px;top:553px;letter-spacing:-.2px">0.00</div>
<div class="pill" style="left:1243px;top:553px">Liu Luliang</div>
<svg style="left:1243px;top:552px" width="22" height="22" viewBox="0 0 22 22"><defs><clipPath id="c"><circle cx="11" cy="11" r="11"/></clipPath></defs><g clip-path="url(#c)"><rect width="22" height="22" fill="#f1f5f7"/><circle cx="11" cy="11" r="10.500" fill="none" stroke="#c5e2f4" stroke-width="1"/><ellipse cx="13.800" cy="3.200" rx="4" ry="3.200" fill="#1f2c28"/><path d="M14 5.500L22 4v15.500l-5 .5-3-6z" fill="#17211c"/><ellipse cx="10.600" cy="7.600" rx="5.300" ry="2.900" fill="#0b0e0c"/><ellipse cx="17.800" cy="6.500" rx="2" ry="1.500" fill="#9cc4dc" opacity=".8"/><ellipse cx="10.300" cy="12.800" rx="2.700" ry="3.900" fill="#7b4458"/><circle cx="11" cy="12.200" r="1.100" fill="#dba064"/><path d="M11.600 14.500h3v6.800h-3z" fill="#26302b"/><circle cx="19.200" cy="12" r="1.700" fill="#3f9159"/><circle cx="17.200" cy="15.500" r=".9" fill="#3f9159"/><circle cx="20" cy="7.500" r="1" fill="#2f7a48"/><circle cx="4" cy="10.500" r="1.100" fill="#f2a2c4"/><circle cx="5.200" cy="11.800" r="1" fill="#dfa070"/><circle cx="4" cy="13.500" r=".6" fill="#f2a2c4"/><circle cx="7.300" cy="17.500" r=".7" fill="#49a05f"/><ellipse cx="16.500" cy="20" rx="2.500" ry="1.600" fill="#a9d3ee"/><path d="M2 8l2-3 1 2z" fill="#4a6a5a"/></g></svg>
<div class="tag" style="left:1389px;top:553px;background:#a5ecb6;padding:0 5px 0 5.500px;letter-spacing:-.13px">Approval passed</div>
<div class="pill" style="left:1531px;top:553px">Zhang Xiuhua</div>
<svg style="left:1531px;top:552px" width="22" height="22" viewBox="0 0 22 22"><defs><clipPath id="c2"><circle cx="11" cy="11" r="11"/></clipPath></defs><g clip-path="url(#c2)"><rect width="22" height="22" fill="#151817"/><path d="M12.500 0H22v22h-7.500l2-6-1-5.500-2.500-4z" fill="#9aa5a8"/><path d="M6 1.500h3.200v8H6z" fill="#39433f"/><path d="M9.200 4.500c0-3.200 4.400-3.200 4.400 0l1.800 8h-7z" fill="#0d0f0e"/><ellipse cx="11.400" cy="6.300" rx="1.700" ry="2.900" fill="#c99a88"/><path d="M9.700 3.800c.5-1.600 3-1.600 3.400 0-1-.6-2.400-.6-3.400 0z" fill="#0d0f0e"/><path d="M10.500 8.800h1.700v2.700h-1.700z" fill="#b98a7c"/><path d="M5.800 15.200h1.700v5.600H5.800z" fill="#c99a88"/><path d="M6 19.500h3.200v1.600H6z" fill="#c99a88"/><path d="M9.800 18.300h5.700V20H9.800z" fill="#f0a3cf"/><path d="M9 15.200h4v.8H9z" fill="#b5b8b7"/><path d="M14.500 15h1.300v4h-1.300z" fill="#c99a88" opacity=".7"/></g></svg>
<div class="tag" style="left:1677px;top:553px;background:#a5ecb6;padding:0 5px 0 5.500px;letter-spacing:-.13px">Approval passed</div>
<div class="t" style="left:258px;width:40px;text-align:center;top:589px">11</div>
<div class="t" style="left:368px;top:589px">RK-3</div>
<div class="tag" style="left:494px;top:589px;background:#fcb3da">effective</div>
<div class="t" style="left:636px;top:589px">2021-02-18</div>
<div class="abs" style="left:780px;top:589px;width:168px;height:20px;overflow:hidden;white-space:nowrap"><span style="display:inline-block;height:20px;line-height:20px;background:#c5edfc;border-radius:2px;padding:0 8px;margin-right:10px;font-size:14px">25 cents 830-11</span><span style="display:inline-block;height:20px;line-height:20px;background:#c5edfc;border-radius:2px;padding:0 8px;margin-right:10px;font-size:14px">25 cents</span></div>
<div class="t" style="left:955px;top:589px;letter-spacing:-.2px">2025.00</div>
<div class="t" style="left:1099px;top:589px;letter-spacing:-.2px">0.00</div>
<div class="pill" style="left:1243px;top:589px">Liu Luliang</div>
<svg style="left:1243px;top:588px" width="22" height="22" viewBox="0 0 22 22"><defs><clipPath id="c"><circle cx="11" cy="11" r="11"/></clipPath></defs><g clip-path="url(#c)"><rect width="22" height="22" fill="#f1f5f7"/><circle cx="11" cy="11" r="10.500" fill="none" stroke="#c5e2f4" stroke-width="1"/><ellipse cx="13.800" cy="3.200" rx="4" ry="3.200" fill="#1f2c28"/><path d="M14 5.500L22 4v15.500l-5 .5-3-6z" fill="#17211c"/><ellipse cx="10.600" cy="7.600" rx="5.300" ry="2.900" fill="#0b0e0c"/><ellipse cx="17.800" cy="6.500" rx="2" ry="1.500" fill="#9cc4dc" opacity=".8"/><ellipse cx="10.300" cy="12.800" rx="2.700" ry="3.900" fill="#7b4458"/><circle cx="11" cy="12.200" r="1.100" fill="#dba064"/><path d="M11.600 14.500h3v6.800h-3z" fill="#26302b"/><circle cx="19.200" cy="12" r="1.700" fill="#3f9159"/><circle cx="17.200" cy="15.500" r=".9" fill="#3f9159"/><circle cx="20" cy="7.500" r="1" fill="#2f7a48"/><circle cx="4" cy="10.500" r="1.100" fill="#f2a2c4"/><circle cx="5.200" cy="11.800" r="1" fill="#dfa070"/><circle cx="4" cy="13.500" r=".6" fill="#f2a2c4"/><circle cx="7.300" cy="17.500" r=".7" fill="#49a05f"/><ellipse cx="16.500" cy="20" rx="2.500" ry="1.600" fill="#a9d3ee"/><path d="M2 8l2-3 1 2z" fill="#4a6a5a"/></g></svg>
<div class="tag" style="left:1389px;top:589px;background:#a5ecb6;padding:0 5px 0 5.500px;letter-spacing:-.13px">Approval passed</div>
<div class="pill" style="left:1531px;top:589px">Zhang Xiuhua</div>
<svg style="left:1531px;top:588px" width="22" height="22" viewBox="0 0 22 22"><defs><clipPath id="c2"><circle cx="11" cy="11" r="11"/></clipPath></defs><g clip-path="url(#c2)"><rect width="22" height="22" fill="#151817"/><path d="M12.500 0H22v22h-7.500l2-6-1-5.500-2.500-4z" fill="#9aa5a8"/><path d="M6 1.500h3.200v8H6z" fill="#39433f"/><path d="M9.200 4.500c0-3.200 4.400-3.200 4.400 0l1.800 8h-7z" fill="#0d0f0e"/><ellipse cx="11.400" cy="6.300" rx="1.700" ry="2.900" fill="#c99a88"/><path d="M9.700 3.800c.5-1.600 3-1.600 3.400 0-1-.6-2.400-.6-3.400 0z" fill="#0d0f0e"/><path d="M10.500 8.800h1.700v2.700h-1.700z" fill="#b98a7c"/><path d="M5.800 15.200h1.700v5.600H5.800z" fill="#c99a88"/><path d="M6 19.500h3.200v1.600H6z" fill="#c99a88"/><path d="M9.800 18.300h5.700V20H9.800z" fill="#f0a3cf"/><path d="M9 15.200h4v.8H9z" fill="#b5b8b7"/><path d="M14.500 15h1.300v4h-1.300z" fill="#c99a88" opacity=".7"/></g></svg>
<div class="tag" style="left:1677px;top:589px;background:#a5ecb6;padding:0 5px 0 5.500px;letter-spacing:-.13px">Approval passed</div>
<div class="t" style="left:258px;width:40px;text-align:center;top:625px">12</div>
<div class="t" style="left:368px;top:625px">RK-13</div>
<div class="tag" style="left:494px;top:625px;background:#fcb3da">effective</div>
<div class="t" style="left:636px;top:625px">2021-09-16</div>
<div class="abs" style="left:780px;top:625px;width:168px;height:20px;overflow:hidden;white-space:nowrap"><span style="display:inline-block;height:20px;line-height:20px;background:#c5edfc;border-radius:2px;padding:0 8px;margin-right:10px;font-size:14px">9% gold wire marg-20</span></div>
<div class="t" style="left:955px;top:625px;letter-spacing:-.2px">2000.00</div>
<div class="t" style="left:1099px;top:625px;letter-spacing:-.2px">0.00</div>
<div class="pill" style="left:1243px;top:625px">Liu Luliang</div>
<svg style="left:1243px;top:624px" width="22" height="22" viewBox="0 0 22 22"><defs><clipPath id="c"><circle cx="11" cy="11" r="11"/></clipPath></defs><g clip-path="url(#c)"><rect width="22" height="22" fill="#f1f5f7"/><circle cx="11" cy="11" r="10.500" fill="none" stroke="#c5e2f4" stroke-width="1"/><ellipse cx="13.800" cy="3.200" rx="4" ry="3.200" fill="#1f2c28"/><path d="M14 5.500L22 4v15.500l-5 .5-3-6z" fill="#17211c"/><ellipse cx="10.600" cy="7.600" rx="5.300" ry="2.900" fill="#0b0e0c"/><ellipse cx="17.800" cy="6.500" rx="2" ry="1.500" fill="#9cc4dc" opacity=".8"/><ellipse cx="10.300" cy="12.800" rx="2.700" ry="3.900" fill="#7b4458"/><circle cx="11" cy="12.200" r="1.100" fill="#dba064"/><path d="M11.600 14.500h3v6.800h-3z" fill="#26302b"/><circle cx="19.200" cy="12" r="1.700" fill="#3f9159"/><circle cx="17.200" cy="15.500" r=".9" fill="#3f9159"/><circle cx="20" cy="7.500" r="1" fill="#2f7a48"/><circle cx="4" cy="10.500" r="1.100" fill="#f2a2c4"/><circle cx="5.200" cy="11.800" r="1" fill="#dfa070"/><circle cx="4" cy="13.500" r=".6" fill="#f2a2c4"/><circle cx="7.300" cy="17.500" r=".7" fill="#49a05f"/><ellipse cx="16.500" cy="20" rx="2.500" ry="1.600" fill="#a9d3ee"/><path d="M2 8l2-3 1 2z" fill="#4a6a5a"/></g></svg>
<div class="tag" style="left:1389px;top:625px;background:#a5ecb6;padding:0 5px 0 5.500px;letter-spacing:-.13px">Approval passed</div>
<div class="pill" style="left:1531px;top:625px">Zhang Xiuhua</div>
<svg style="left:1531px;top:624px" width="22" height="22" viewBox="0 0 22 22"><defs><clipPath id="c2"><circle cx="11" cy="11" r="11"/></clipPath></defs><g clip-path="url(#c2)"><rect width="22" height="22" fill="#151817"/><path d="M12.500 0H22v22h-7.500l2-6-1-5.500-2.500-4z" fill="#9aa5a8"/><path d="M6 1.500h3.200v8H6z" fill="#39433f"/><path d="M9.200 4.500c0-3.200 4.400-3.200 4.400 0l1.800 8h-7z" fill="#0d0f0e"/><ellipse cx="11.400" cy="6.300" rx="1.700" ry="2.900" fill="#c99a88"/><path d="M9.700 3.800c.5-1.600 3-1.600 3.400 0-1-.6-2.400-.6-3.400 0z" fill="#0d0f0e"/><path d="M10.500 8.800h1.700v2.700h-1.700z" fill="#b98a7c"/><path d="M5.800 15.200h1.700v5.600H5.800z" fill="#c99a88"/><path d="M6 19.500h3.200v1.600H6z" fill="#c99a88"/><path d="M9.800 18.300h5.700V20H9.800z" fill="#f0a3cf"/><path d="M9 15.200h4v.8H9z" fill="#b5b8b7"/><path d="M14.500 15h1.300v4h-1.300z" fill="#c99a88" opacity=".7"/></g></svg>
<div class="tag" style="left:1677px;top:625px;background:#a5ecb6;padding:0 5px 0 5.500px;letter-spacing:-.13px">Approval passed</div>
<div class="t" style="left:258px;width:40px;text-align:center;top:661px">13</div>
<div class="t" style="left:368px;top:661px">RK-12</div>
<div class="tag" style="left:494px;top:661px;background:#fcb3da">effective</div>
<div class="t" style="left:636px;top:661px">2021-09-16</div>
<div class="abs" style="left:780px;top:661px;width:168px;height:20px;overflow:hidden;white-space:nowrap"><span style="display:inline-block;height:20px;line-height:20px;background:#c5edfc;border-radius:2px;padding:0 8px;margin-right:10px;font-size:14px">9% gold silk mag-30</span><span style="display:inline-block;height:20px;line-height:20px;background:#c5edfc;border-radius:2px;padding:0 8px;margin-right:10px;font-size:14px">18%</span></div>
<div class="t" style="left:955px;top:661px;letter-spacing:-.2px">1100.00</div>
<div class="t" style="left:1099px;top:661px;letter-spacing:-.2px">1100.00</div>
<div class="pill" style="left:1243px;top:661px">Liu Luliang</div>
<svg style="left:1243px;top:660px" width="22" height="22" viewBox="0 0 22 22"><defs><clipPath id="c"><circle cx="11" cy="11" r="11"/></clipPath></defs><g clip-path="url(#c)"><rect width="22" height="22" fill="#f1f5f7"/><circle cx="11" cy="11" r="10.500" fill="none" stroke="#c5e2f4" stroke-width="1"/><ellipse cx="13.800" cy="3.200" rx="4" ry="3.200" fill="#1f2c28"/><path d="M14 5.500L22 4v15.500l-5 .5-3-6z" fill="#17211c"/><ellipse cx="10.600" cy="7.600" rx="5.300" ry="2.900" fill="#0b0e0c"/><ellipse cx="17.800" cy="6.500" rx="2" ry="1.500" fill="#9cc4dc" opacity=".8"/><ellipse cx="10.300" cy="12.800" rx="2.700" ry="3.900" fill="#7b4458"/><circle cx="11" cy="12.200" r="1.100" fill="#dba064"/><path d="M11.600 14.500h3v6.800h-3z" fill="#26302b"/><circle cx="19.200" cy="12" r="1.700" fill="#3f9159"/><circle cx="17.200" cy="15.500" r=".9" fill="#3f9159"/><circle cx="20" cy="7.500" r="1" fill="#2f7a48"/><circle cx="4" cy="10.500" r="1.100" fill="#f2a2c4"/><circle cx="5.200" cy="11.800" r="1" fill="#dfa070"/><circle cx="4" cy="13.500" r=".6" fill="#f2a2c4"/><circle cx="7.300" cy="17.500" r=".7" fill="#49a05f"/><ellipse cx="16.500" cy="20" rx="2.500" ry="1.600" fill="#a9d3ee"/><path d="M2 8l2-3 1 2z" fill="#4a6a5a"/></g></svg>
<div class="tag" style="left:1389px;top:661px;background:#a5ecb6;padding:0 5px 0 5.500px;letter-spacing:-.13px">Approval passed</div>
<div class="pill" style="left:1531px;top:661px">Zhang Xiuhua</div>
<svg style="left:1531px;top:660px" width="22" height="22" viewBox="0 0 22 22"><defs><clipPath id="c2"><circle cx="11" cy="11" r="11"/></clipPath></defs><g clip-path="url(#c2)"><rect width="22" height="22" fill="#151817"/><path d="M12.500 0H22v22h-7.500l2-6-1-5.500-2.500-4z" fill="#9aa5a8"/><path d="M6 1.500h3.200v8H6z" fill="#39433f"/><path d="M9.200 4.500c0-3.200 4.400-3.200 4.400 0l1.800 8h-7z" fill="#0d0f0e"/><ellipse cx="11.400" cy="6.300" rx="1.700" ry="2.900" fill="#c99a88"/><path d="M9.700 3.800c.5-1.600 3-1.600 3.400 0-1-.6-2.400-.6-3.400 0z" fill="#0d0f0e"/><path d="M10.500 8.800h1.700v2.700h-1.700z" fill="#b98a7c"/><path d="M5.800 15.200h1.700v5.600H5.800z" fill="#c99a88"/><path d="M6 19.500h3.200v1.600H6z" fill="#c99a88"/><path d="M9.800 18.300h5.700V20H9.800z" fill="#f0a3cf"/><path d="M9 15.200h4v.8H9z" fill="#b5b8b7"/><path d="M14.500 15h1.300v4h-1.300z" fill="#c99a88" opacity=".7"/></g></svg>
<div class="tag" style="left:1677px;top:661px;background:#a5ecb6;padding:0 5px 0 5.500px;letter-spacing:-.13px">Approval passed</div>
<div class="t" style="left:368px;top:697px">RK-14</div>
<div class="tag" style="left:494px;top:697px;background:#fcb3da">effective</div>
<div class="t" style="left:955px;top:697px;letter-spacing:-.2px">0.00</div>
<div class="t" style="left:1099px;top:697px;letter-spacing:-.2px">0.00</div>
<div class="pill" style="left:1243px;top:697px">lucy</div>
<svg style="left:1243px;top:696px" width="22" height="22" viewBox="0 0 22 22"><circle cx="11" cy="11" r="11" fill="#8ec0e6"/><circle cx="11" cy="8.300" r="3.300" fill="#fff"/><path d="M4.500 17c0-3 4-4.500 6.500-4.500s6.500 1.500 6.500 4.500v.800h-13z" fill="#fff"/></svg>
<div class="pill" style="left:1531px;top:697px">Li Xinyuan</div>
<svg style="left:1531px;top:696px" width="22" height="22" viewBox="0 0 22 22"><defs><clipPath id="c3"><circle cx="11" cy="11" r="11"/></clipPath></defs><g clip-path="url(#c3)"><rect width="22" height="22" fill="#ededed"/><circle cx="11" cy="11" r="10.500" fill="none" stroke="#cfe6f5" stroke-width="1"/><path d="M8 2.500l1.500-1 1.500 1 2-1.500c3 0 4 2 4.300 3.500 1.200.7 1.300 3.500-.5 4.500h-5l-.3-4-2.300 1-1.200-.2z" fill="#5b5b5b"/><path d="M9 5.800l2.200-.8.300 4.200H9.300l-1-1.200z" fill="#fafafa"/><path d="M8 8l1.800 1.600-.8.800-1.500-1.700z" fill="#4a4a4a"/><path d="M13 9.800c2.500 1 5 4 6.800 8.200L17 22H7.500l.3-5c.5-3 2.700-5.800 5.200-7.200z" fill="#4fa2dd"/><path d="M7.500 17l3-1.500 2.500 1.200 2.500-1.700 2.500 1.500L20 16v6H7.500z" fill="#8fdc9a" opacity=".85"/><path d="M9 18.500h1.200v1.200H9zM11.500 19.500h1.200v1.200h-1.200zM14 18.300h1.200v1.200H14zM16 19.600h1.200v1.200H16z" fill="#3f8fe0"/><path d="M5.500 14.500l1.300-1.500.7 8H5z" fill="#8fb5c4"/></g></svg>
<svg style="left:255px;top:702px" width="4" height="9" viewBox="0 0 4 9" fill="#9cc8ea"><rect x="0" y="0" width="1.300" height="1.300"/><rect x="2.600" y="0" width="1.300" height="1.300"/><rect x="0" y="2.500" width="1.300" height="1.300"/><rect x="2.600" y="2.500" width="1.300" height="1.300"/><rect x="0" y="5" width="1.300" height="1.300"/><rect x="2.600" y="5" width="1.300" height="1.300"/><rect x="0" y="7.500" width="1.300" height="1.300"/><rect x="2.600" y="7.500" width="1.300" height="1.300"/></svg>
<div class="abs" style="left:271px;top:701px;width:10.500px;height:10.500px;border:1.200px solid #86bde6;border-radius:.5px"></div>
<svg style="left:292.5px;top:705px" width="7" height="4" viewBox="0 0 7 4"><path d="M0 0h7L3.500 4z" fill="#86bde6"/></svg>
<svg style="left:320px;top:701px" width="10" height="10" viewBox="0 0 10 10" fill="none" stroke="#333" stroke-width="1.400"><path d="M.7 3V.7H3M7 .7h2.300V3M9.300 7v2.300H7M3 9.300H.7V7"/></svg>
<div class="abs" style="left:343px;top:687px;width:147px;height:38px;border:2px solid #86bde6"></div>
<div class="abs" style="left:485px;top:721px;width:7px;height:7px;background:#86bde6;border:1px solid #fff"></div>
<svg style="left:272px;top:737px" width="11" height="11" viewBox="0 0 11 11" stroke="#333" stroke-width="1.300"><path d="M5.500 0v11M0 5.500h11"/></svg>
<div class="abs" style="left:244px;top:52px;width:11px;height:882px;background:linear-gradient(to right,#eee 0,#f0f0f0 2px,#f4f4f4 3.500px,#f6f6f6 6px,rgba(0,0,0,.014) 6px,rgba(0,0,0,.01) 9px,rgba(0,0,0,0) 11px)"></div>
<div class="abs" style="left:244px;top:64px;width:24px;height:32px;background:#fff;border-radius:0 4px 4px 0;box-shadow:3px 0 8px rgba(0,0,0,.13)"></div>
<svg style="left:250px;top:75px" width="12" height="10" viewBox="0 0 12 10" fill="none" stroke="#999" stroke-width="1.200"><path d="M5.500 .5L1.500 5l4 4.500M10.500 .5L6.500 5l4 4.500"/></svg>
</body></html>
